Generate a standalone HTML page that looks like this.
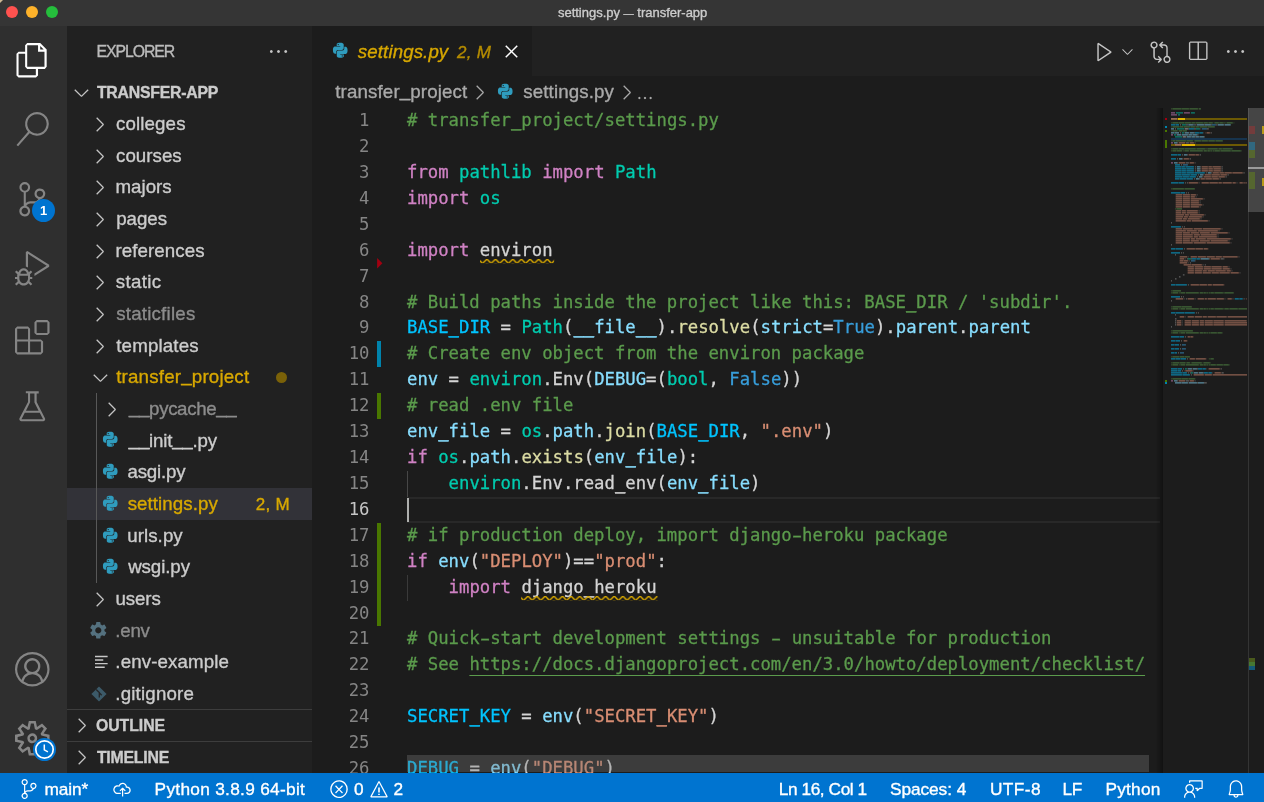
<!DOCTYPE html>
<html lang="en"><head><meta charset="utf-8"><title>settings.py — transfer-app</title>
<style>
*{box-sizing:border-box}
html,body{margin:0;padding:0;background:#1c1c1c;overflow:hidden}
body{width:1264px;height:802px;position:relative;font-family:"Liberation Sans",sans-serif;color:#cccccc;-webkit-font-smoothing:antialiased}
.abs,.ic,.ln,.cl,.tl,.sel,.t{position:absolute}
.ic{display:block;overflow:visible}
#title{left:0;top:0;width:1264px;height:26px;background:#353535}
#title .t{left:0;width:1264px;top:0;height:26px;line-height:25px;text-align:center;font-size:13px;color:#cccccc;letter-spacing:0px}
.tr{position:absolute;top:6px;width:12px;height:12px;border-radius:50%}
#act{left:0;top:26px;width:67px;height:747px;background:#2f2f2f}
#side{left:67px;top:26px;width:245px;height:747px;background:#212121}
#tabs{left:312px;top:26px;width:952px;height:50.4px;background:#212121}
#tab{left:312px;top:26px;width:220px;height:50.4px;background:#1c1c1c}
#status{left:0;top:772.7px;width:1264px;height:30px;background:#0074d0}
.t{white-space:pre;line-height:1;-webkit-text-stroke:0.35px currentColor}
.tl{height:31.68px;line-height:31.68px;font-size:18.72px;white-space:pre}
.fg{color:#cccccc} .dim{color:#8c8c8c} .warn{color:#d8a800}
.sel{left:67px;width:245px;height:31.68px;background:#323238}
.ln{left:312px;width:57.5px;text-align:right;height:25.92px;line-height:25.92px;font-family:"DejaVu Sans Mono","Liberation Mono",monospace;font-size:17.28px;color:#858585}
.ln.cur{color:#c6c6c6}
.cl{left:407px;height:25.92px;line-height:25.92px;font-family:"DejaVu Sans Mono","Liberation Mono",monospace;font-size:17.28px;white-space:pre;color:#d4d4d4;-webkit-text-stroke:0.3px currentColor}
.kw{color:#d082c4} .cls{color:#00ccaf} .var{color:#88deff} .const{color:#00c4ff} .fn{color:#dcdca4}
.str{color:#d98e73} .com{color:#5b9b4c} .b{color:#389edb} .txt{color:#d4d4d4}
.uu{position:relative;top:-2px;text-shadow:0 -0.5px 0 currentColor}
.us{text-shadow:0 0.8px 0 currentColor} .hy{display:inline-block;transform:scaleX(1.7)}
.ul{text-decoration:underline;text-underline-offset:4.8px;text-decoration-thickness:1.2px}
.st{top:772.7px;height:31.68px;line-height:31.68px;font-size:18.72px;color:#fff;white-space:pre}
</style></head><body>
<div id="title" class="abs"><div style="position:absolute;left:0;top:0;width:3px;height:3px;background:#cdb994;clip-path:polygon(0 0,100% 0,0 100%)"></div><div class="tr" style="left:6px;background:#ff524f"></div><div class="tr" style="left:26px;background:#fdb22a"></div><div class="tr" style="left:46px;background:#25be3c"></div></div>
<div id="act" class="abs"></div>
<div id="side" class="abs"></div>
<div id="tabs" class="abs"></div>
<div id="tab" class="abs"></div>
<div id="fg" class="abs" style="left:0;top:0;width:1264px;height:802px;will-change:transform">
<div id="ti" class="t " style="left:557.96px;top:6.00px;font-size:13px;letter-spacing:-0.013px;color:#cccccc;">settings.py <span style="font-size:10.2px">—</span> transfer-app</div>
<!-- activity bar icons -->
<svg class="ic" style="left:15.22px;top:43.28px" width="34.56" height="34.56" viewBox="0 0 16 16" ><path fill="#ffffff" d="M11.68 0H5.65L4.69 1.01V4H1.65L0.69 5.01V15.04L1.65 16H9.71L10.67 15.04V12H13.81L14.67 11.04V2.99ZM11.68 1.39 13.28 2.99H11.68ZM9.65 14.99H1.65V5.01H4.69V11.04L5.65 12H9.65ZM13.65 10.99H5.65V1.01H10.67V4H13.65Z"/></svg>
<svg class="ic" style="left:15.22px;top:112.40px" width="34.56" height="34.56" viewBox="0 0 16 16" ><path fill="#858585" d="M10.19 0Q8.53 0 7.17 0.88Q5.81 1.76 5.15 3.25Q4.48 4.75 4.72 6.35Q4.96 7.95 6.03 9.12L0.69 15.25L1.44 15.89L6.77 9.81Q8.21 10.93 10 10.99Q11.79 11.04 13.28 10.03Q14.77 9.01 15.36 7.31Q15.95 5.6 15.41 3.87Q14.88 2.13 13.41 1.07Q11.95 0 10.19 0ZM10.19 9.97Q8.96 9.97 7.92 9.39Q6.88 8.8 6.27 7.76Q5.65 6.72 5.65 5.49Q5.65 4.27 6.27 3.23Q6.88 2.19 7.92 1.6Q8.96 1.01 10.19 1.01Q11.41 1.01 12.43 1.6Q13.44 2.19 14.05 3.23Q14.67 4.27 14.67 5.49Q14.67 6.72 14.05 7.76Q13.44 8.8 12.43 9.41Q11.41 10.03 10.19 10.03Z"/></svg>
<svg class="ic" style="left:15.22px;top:181.52px" width="34.56" height="34.56" viewBox="0 0 16 16" ><path fill="#858585" d="M14.03 5.49Q14.03 4.8 13.65 4.19Q13.28 3.57 12.64 3.25Q12 2.93 11.31 2.99Q10.61 3.04 10.03 3.47Q9.44 3.89 9.2 4.56Q8.96 5.23 9.07 5.92Q9.17 6.61 9.65 7.12Q10.13 7.63 10.83 7.84Q10.56 8.37 10.08 8.67Q9.6 8.96 9.01 8.96H7.04Q5.87 8.96 5.01 9.76V4.91Q5.97 4.75 6.53 3.97Q7.09 3.2 7.01 2.24Q6.93 1.28 6.21 0.64Q5.49 0 4.53 0Q3.57 0 2.85 0.64Q2.13 1.28 2.05 2.24Q1.97 3.2 2.53 3.97Q3.09 4.75 4.05 4.91V10.99Q3.09 11.2 2.51 11.95Q1.92 12.69 2 13.65Q2.08 14.61 2.75 15.28Q3.41 15.95 4.37 16Q5.33 16.05 6.08 15.47Q6.83 14.88 6.99 13.92Q7.15 12.96 6.67 12.16Q6.19 11.36 5.23 11.09Q5.49 10.56 5.97 10.27Q6.45 9.97 7.04 9.97H9.01Q9.97 9.97 10.75 9.41Q11.52 8.85 11.84 7.95Q12.75 7.84 13.39 7.12Q14.03 6.4 14.03 5.49ZM3.04 2.51Q3.04 1.87 3.47 1.44Q3.89 1.01 4.53 1.01Q5.17 1.01 5.6 1.44Q6.03 1.87 6.03 2.48Q6.03 3.09 5.6 3.55Q5.17 4 4.53 4Q3.89 4 3.47 3.55Q3.04 3.09 3.04 2.51ZM6.03 13.44Q6.03 14.08 5.6 14.51Q5.17 14.93 4.53 14.93Q3.89 14.93 3.47 14.51Q3.04 14.08 3.04 13.47Q3.04 12.85 3.47 12.4Q3.89 11.95 4.53 11.95Q5.17 11.95 5.6 12.4Q6.03 12.85 6.03 13.44ZM11.52 6.99Q10.88 6.99 10.45 6.53Q10.03 6.08 10.03 5.47Q10.03 4.85 10.45 4.43Q10.88 4 11.49 4Q12.11 4 12.56 4.43Q13.01 4.85 13.01 5.47Q13.01 6.08 12.56 6.53Q12.11 6.99 11.52 6.99Z"/></svg>
<svg class="ic" style="left:15.22px;top:250.64px" width="34.56" height="34.56" viewBox="0 0 16 16" ><path fill="#858585" d="M7.31 9.01 6.4 9.87Q6.19 9.07 5.52 8.53Q4.85 8 4 8Q3.15 8 2.48 8.53Q1.81 9.07 1.6 9.87L0.69 9.01L0 9.71L1.17 10.83L1.01 10.99V12H0V13.01H1.01V13.07Q1.07 13.55 1.28 14.03L0 15.31L0.69 16L1.81 14.88Q2.19 15.41 2.77 15.71Q3.36 16 4 16Q4.64 16 5.23 15.71Q5.81 15.41 6.19 14.88L7.31 16L8 15.31L6.72 13.97Q6.93 13.55 6.99 13.01V12.96H8V12H6.99V10.99L6.88 10.83L8 9.71ZM4 9.01Q4.64 9.01 5.07 9.44Q5.49 9.87 5.49 10.51H2.51Q2.51 9.87 2.93 9.44Q3.36 9.01 4 9.01ZM6.03 13.01Q5.92 13.81 5.36 14.37Q4.8 14.93 4 14.99Q3.2 14.93 2.64 14.37Q2.08 13.81 2.03 13.01V11.52H6.03ZM15.84 6.4V7.25L9.01 11.57V10.4L14.67 6.83L6.03 1.33V7.63Q5.55 7.31 5.01 7.15V0.43L5.76 0Z"/></svg>
<svg class="ic" style="left:15.22px;top:319.76px" width="34.56" height="34.56" viewBox="0 0 16 16" ><path fill="#858585" d="M9.01 1.01 10.03 0H14.99L16 1.01V5.97L14.99 6.99H10.03L9.01 5.97ZM10.03 1.01V5.97H14.99V1.01ZM0 9.97V4L1.01 2.99H6.03L6.99 4V9.01H12L13.01 9.97V14.99L12 16H1.01L0 14.99ZM6.03 9.01V4H1.01V9.01ZM6.03 9.97H1.01V14.99H6.03ZM6.99 14.99H12V9.97H6.99Z"/></svg>
<svg class="ic" style="left:15.22px;top:388.88px" width="34.56" height="34.56" viewBox="0 0 16 16" ><path fill="#858585" d="M13.87 13.55 10.03 6.03V2.03H10.99V1.01H5.01V1.97H6.03V5.97L2.08 13.55Q1.87 14.08 2.16 14.53Q2.45 14.99 2.99 14.99H13.01Q13.55 14.99 13.84 14.53Q14.13 14.08 13.87 13.55ZM6.88 6.4 6.99 6.19V2.03H9.01V6.24L10.93 10.03H5.07ZM2.99 14.03 4.53 10.99H11.47L13.01 14.03Z"/></svg>
<svg class="ic" style="left:15.22px;top:651.72px" width="34.56" height="34.56" viewBox="0 0 16 16" ><path fill="#858585" d="M16 8Q16 5.81 14.93 3.97Q13.87 2.13 12.03 1.07Q10.19 0 8 0Q5.81 0 3.97 1.07Q2.13 2.13 1.07 3.97Q0 5.81 0 8Q0 9.76 0.75 11.36Q1.49 12.96 2.83 14.08L3.52 14.61Q5.55 16 8 16Q10.45 16 12.48 14.61L13.23 14.08Q14.51 12.96 15.25 11.36Q16 9.76 16 8ZM8 14.99Q5.81 14.99 4 13.71L4.05 13.33Q4.21 12.8 4.48 12.35Q4.75 11.89 5.12 11.52Q5.49 11.15 5.92 10.88Q6.35 10.61 6.91 10.48Q7.47 10.35 8 10.35Q8.8 10.35 9.57 10.64Q10.35 10.93 10.91 11.49Q11.47 12.05 11.79 12.8Q11.95 13.23 12.05 13.71Q10.24 14.99 8 14.99ZM5.55 7.57Q5.33 7.09 5.33 6.56Q5.33 6.03 5.55 5.55Q5.76 5.07 6.11 4.72Q6.45 4.37 6.93 4.13Q7.41 3.89 8 3.89Q8.59 3.89 9.04 4.11Q9.49 4.32 9.87 4.69Q10.24 5.07 10.45 5.55Q10.67 6.03 10.67 6.59Q10.67 7.15 10.45 7.6Q10.24 8.05 9.87 8.43Q9.49 8.8 9.01 9.01Q8 9.44 6.93 9.01Q6.51 8.8 6.13 8.43Q5.76 8.05 5.55 7.57ZM12.96 12.91Q12.96 12.91 12.96 12.85V12.8Q12.75 12.05 12.29 11.41Q11.84 10.77 11.2 10.29Q10.72 9.92 10.13 9.65Q10.4 9.49 10.61 9.28Q10.99 8.91 11.25 8.48Q11.79 7.63 11.73 6.56Q11.79 5.81 11.49 5.12Q11.2 4.43 10.67 3.89Q10.13 3.36 9.44 3.09Q8.75 2.83 7.97 2.83Q7.2 2.83 6.51 3.09Q5.81 3.36 5.31 3.89Q4.8 4.43 4.51 5.12Q4.21 5.81 4.21 6.56Q4.21 7.09 4.37 7.6Q4.53 8.11 4.75 8.48Q4.96 8.85 5.39 9.28Q5.6 9.49 5.87 9.71Q5.33 9.92 4.85 10.29Q4.21 10.77 3.76 11.41Q3.31 12.05 3.04 12.85V12.91Q2.08 11.95 1.55 10.67Q1.01 9.39 1.01 8Q1.01 6.08 1.95 4.48Q2.88 2.88 4.48 1.95Q6.08 1.01 8 1.01Q9.92 1.01 11.52 1.95Q13.12 2.88 14.05 4.48Q14.99 6.08 14.99 8Q14.99 9.39 14.48 10.67Q13.97 11.95 12.96 12.91Z"/></svg>
<svg class="ic" style="left:15.22px;top:720.82px" width="34.56" height="34.56" viewBox="0 0 16 16" ><path fill="#858585" d="M13.23 5.81 16 6.4V9.6L13.23 10.19L14.83 12.53L12.53 14.77L10.19 13.23L9.6 16H6.4L5.81 13.23L3.47 14.83L1.23 12.53L2.77 10.19L0 9.6V6.4L2.77 5.81L1.23 3.47L3.47 1.17L5.81 2.77L6.4 0H9.6L10.19 2.77L12.53 1.17L14.83 3.47ZM12.21 9.23 14.88 8.69V7.36L12.21 6.77L11.84 5.92L13.33 3.63L12.43 2.67L10.13 4.21L9.23 3.84L8.69 1.17H7.36L6.83 3.84L5.97 4.21L3.68 2.67L2.72 3.63L4.27 5.92L3.89 6.77L1.23 7.36V8.69L3.89 9.23L4.27 10.08L2.72 12.37L3.68 13.33L5.97 11.79L6.83 12.16L7.36 14.83H8.69L9.23 12.16L10.13 11.79L12.43 13.33L13.33 12.37L11.84 10.08ZM6.72 6.08Q7.31 5.71 8 5.71Q8.96 5.71 9.63 6.37Q10.29 7.04 10.29 8Q10.29 8.8 9.76 9.44Q9.23 10.08 8.43 10.24Q7.63 10.4 6.91 10.03Q6.19 9.65 5.89 8.88Q5.6 8.11 5.81 7.33Q6.03 6.56 6.72 6.08ZM7.36 8.96Q7.68 9.12 8 9.12Q8.48 9.12 8.8 8.8Q9.12 8.48 9.12 8.03Q9.12 7.57 8.88 7.28Q8.64 6.99 8.24 6.91Q7.84 6.83 7.47 7.01Q7.09 7.2 6.93 7.57Q6.77 7.95 6.91 8.35Q7.04 8.75 7.36 8.96Z"/></svg>
<div class="abs" style="left:32px;top:198.5px;width:23px;height:23px;border-radius:50%;background:#0074d0;color:#fff;font-size:13px;font-weight:bold;text-align:center;line-height:23px">1</div>
<div class="abs" style="left:32.500px;top:737.5px;width:23px;height:23px;border-radius:50%;background:#0074d0"></div>
<svg class="ic" style="left:32.5px;top:737.5px" width="23" height="23" viewBox="0 0 23 23"><circle cx="11.5" cy="11.5" r="8.700" fill="none" stroke="#fff" stroke-width="1.700"/><path d="M11.300 6.500v5.300l3.600 2" fill="none" stroke="#fff" stroke-width="1.500"/></svg>
<!-- sidebar -->
<div id="explorer" class="t " style="left:96.38px;top:44.00px;font-size:15.84px;letter-spacing:-1.050px;color:#bbbbbb;">EXPLORER</div>
<svg class="ic" style="left:267.26px;top:39.90px" width="23" height="23" viewBox="0 0 16 16"><path fill="#c5c5c5" d="M4 8Q4 8.43 3.71 8.72Q3.41 9.01 2.99 9.01Q2.56 9.01 2.29 8.72Q2.03 8.43 2.03 8Q2.03 7.57 2.29 7.28Q2.56 6.99 2.99 6.99Q3.41 6.99 3.71 7.28Q4 7.57 4 8ZM9.01 8Q9.01 8.43 8.72 8.72Q8.43 9.01 8 9.01Q7.57 9.01 7.28 8.72Q6.99 8.43 6.99 8Q6.99 7.57 7.28 7.28Q7.57 6.99 8 6.99Q8.43 6.99 8.72 7.28Q9.01 7.57 9.01 8ZM14.03 8Q14.03 8.43 13.73 8.72Q13.44 9.01 13.01 9.01Q12.59 9.01 12.29 8.72Q12 8.43 12 8Q12 7.57 12.29 7.28Q12.59 6.99 13.01 6.99Q13.44 6.99 13.73 7.28Q14.03 7.57 14.03 8Z"/></svg>
<svg class="ic" style="left:70.14px;top:81.10px" width="23" height="23" viewBox="0 0 16 16"><path fill="#c5c5c5" d="M8 10.08 12.32 5.71 12.96 6.35 8.27 10.99H7.68L2.99 6.35L3.63 5.71Z"/></svg>
<div id="root" class="t " style="left:96.89px;top:85.00px;font-size:15.84px;letter-spacing:-0.225px;color:#cccccc;font-weight:bold">TRANSFER-APP</div>
<svg class="ic" style="left:88.10px;top:113.08px" width="23" height="23" viewBox="0 0 16 16"><path fill="#c5c5c5" d="M10.08 8 5.71 3.68 6.35 3.04 10.99 7.73V8.32L6.35 13.01L5.71 12.37Z"/></svg>
<div id="tr0" class="t " style="left:116.04px;top:115.00px;font-size:18.72px;letter-spacing:0.118px;color:#cccccc;">colleges</div>
<svg class="ic" style="left:88.10px;top:144.76px" width="23" height="23" viewBox="0 0 16 16"><path fill="#c5c5c5" d="M10.08 8 5.71 3.68 6.35 3.04 10.99 7.73V8.32L6.35 13.01L5.71 12.37Z"/></svg>
<div id="tr1" class="t " style="left:116.04px;top:147.00px;font-size:18.72px;letter-spacing:0.023px;color:#cccccc;">courses</div>
<svg class="ic" style="left:88.10px;top:176.44px" width="23" height="23" viewBox="0 0 16 16"><path fill="#c5c5c5" d="M10.08 8 5.71 3.68 6.35 3.04 10.99 7.73V8.32L6.35 13.01L5.71 12.37Z"/></svg>
<div id="tr2" class="t " style="left:115.47px;top:178.00px;font-size:18.72px;letter-spacing:0.027px;color:#cccccc;">majors</div>
<svg class="ic" style="left:88.10px;top:208.12px" width="23" height="23" viewBox="0 0 16 16"><path fill="#c5c5c5" d="M10.08 8 5.71 3.68 6.35 3.04 10.99 7.73V8.32L6.35 13.01L5.71 12.37Z"/></svg>
<div id="tr3" class="t " style="left:116.13px;top:210.00px;font-size:18.72px;letter-spacing:0.004px;color:#cccccc;">pages</div>
<svg class="ic" style="left:88.10px;top:239.80px" width="23" height="23" viewBox="0 0 16 16"><path fill="#c5c5c5" d="M10.08 8 5.71 3.68 6.35 3.04 10.99 7.73V8.32L6.35 13.01L5.71 12.37Z"/></svg>
<div id="tr4" class="t " style="left:115.54px;top:242.00px;font-size:18.72px;letter-spacing:0.073px;color:#cccccc;">references</div>
<svg class="ic" style="left:88.10px;top:271.48px" width="23" height="23" viewBox="0 0 16 16"><path fill="#c5c5c5" d="M10.08 8 5.71 3.68 6.35 3.04 10.99 7.73V8.32L6.35 13.01L5.71 12.37Z"/></svg>
<div id="tr5" class="t " style="left:115.81px;top:273.00px;font-size:18.72px;letter-spacing:0.320px;color:#cccccc;">static</div>
<svg class="ic" style="left:88.10px;top:303.16px" width="23" height="23" viewBox="0 0 16 16"><path fill="#c5c5c5" d="M10.08 8 5.71 3.68 6.35 3.04 10.99 7.73V8.32L6.35 13.01L5.71 12.37Z"/></svg>
<div id="tr6" class="t " style="left:116.20px;top:305.00px;font-size:18.72px;letter-spacing:0.214px;color:#8c8c8c;">staticfiles</div>
<svg class="ic" style="left:88.10px;top:334.84px" width="23" height="23" viewBox="0 0 16 16"><path fill="#c5c5c5" d="M10.08 8 5.71 3.68 6.35 3.04 10.99 7.73V8.32L6.35 13.01L5.71 12.37Z"/></svg>
<div id="tr7" class="t " style="left:116.27px;top:337.00px;font-size:18.72px;letter-spacing:0.150px;color:#cccccc;">templates</div>
<svg class="ic" style="left:88.74px;top:366.06px" width="23" height="23" viewBox="0 0 16 16"><path fill="#c5c5c5" d="M8 10.08 12.32 5.71 12.96 6.35 8.27 10.99H7.68L2.99 6.35L3.63 5.71Z"/></svg>
<div id="tr8" class="t " style="left:116.18px;top:368.00px;font-size:18.72px;letter-spacing:0.199px;color:#d8a800;">transfer<span class="uu">_</span>project</div>
<svg class="ic" style="left:100.10px;top:398.20px" width="23" height="23" viewBox="0 0 16 16"><path fill="#c5c5c5" d="M10.08 8 5.71 3.68 6.35 3.04 10.99 7.73V8.32L6.35 13.01L5.71 12.37Z"/></svg>
<div id="tr9" class="t " style="left:129.01px;top:400.00px;font-size:18.72px;letter-spacing:-0.359px;color:#8c8c8c;"><span class="uu">_</span><span class="uu">_</span>pycache<span class="uu">_</span><span class="uu">_</span></div>
<svg class="ic" style="left:101.85px;top:431.47px" width="16.5" height="16.5" viewBox="0 0 32 32"><path fill="#2f9cbe" d="M15.9 1.5c-7.2 0-6.8 3.1-6.8 3.1v3.3h6.9v1H6.4S1.8 8.300 1.800 15.700s4 7.100 4 7.100h2.400v-3.400s-.13-4 3.950-4h6.800s3.800.06 3.800-3.700V5.500s.58-4-6.850-4zM12.100 3.700a1.240 1.240 0 1 1 0 2.480 1.240 1.240 0 0 1 0-2.480z"/><path fill="#2f9cbe" d="M16.100 30.500c7.200 0 6.800-3.100 6.800-3.100v-3.300H16v-1h9.600s4.600.52 4.600-6.800-4-7.100-4-7.100h-2.400v3.400s.13 4-3.950 4h-6.800s-3.800-.06-3.800 3.700v6.200s-.58 4 6.850 4zM19.900 28.300a1.240 1.240 0 1 1 0-2.480 1.240 1.240 0 0 1 0 2.480z"/></svg>
<div id="tr10" class="t " style="left:128.74px;top:432.00px;font-size:18.72px;letter-spacing:-0.218px;color:#cccccc;"><span class="uu">_</span><span class="uu">_</span>init<span class="uu">_</span><span class="uu">_</span>.py</div>
<svg class="ic" style="left:101.85px;top:463.15px" width="16.5" height="16.5" viewBox="0 0 32 32"><path fill="#2f9cbe" d="M15.9 1.5c-7.2 0-6.8 3.1-6.8 3.1v3.3h6.9v1H6.4S1.8 8.300 1.800 15.700s4 7.100 4 7.100h2.400v-3.400s-.13-4 3.950-4h6.800s3.800.06 3.800-3.700V5.500s.58-4-6.850-4zM12.100 3.700a1.240 1.240 0 1 1 0 2.480 1.240 1.240 0 0 1 0-2.480z"/><path fill="#2f9cbe" d="M16.100 30.500c7.200 0 6.800-3.100 6.800-3.100v-3.300H16v-1h9.600s4.600.52 4.600-6.800-4-7.100-4-7.100h-2.400v3.400s.13 4-3.950 4h-6.800s-3.800-.06-3.800 3.700v6.200s-.58 4 6.850 4zM19.900 28.300a1.240 1.240 0 1 1 0-2.480 1.240 1.240 0 0 1 0 2.480z"/></svg>
<div id="tr11" class="t " style="left:127.44px;top:463.00px;font-size:18.72px;letter-spacing:-0.166px;color:#cccccc;">asgi.py</div>
<div class="sel" style="top:488.24px"></div>
<svg class="ic" style="left:101.85px;top:494.83px" width="16.5" height="16.5" viewBox="0 0 32 32"><path fill="#2f9cbe" d="M15.9 1.5c-7.2 0-6.8 3.1-6.8 3.1v3.3h6.9v1H6.4S1.8 8.300 1.800 15.700s4 7.100 4 7.100h2.400v-3.400s-.13-4 3.950-4h6.800s3.800.06 3.800-3.700V5.500s.58-4-6.850-4zM12.100 3.700a1.240 1.240 0 1 1 0 2.480 1.240 1.240 0 0 1 0-2.480z"/><path fill="#2f9cbe" d="M16.100 30.500c7.200 0 6.800-3.100 6.800-3.100v-3.300H16v-1h9.600s4.600.52 4.600-6.800-4-7.100-4-7.100h-2.400v3.400s.13 4-3.950 4h-6.800s-3.800-.06-3.800 3.700v6.200s-.58 4 6.850 4zM19.900 28.300a1.240 1.240 0 1 1 0-2.480 1.240 1.240 0 0 1 0 2.480z"/></svg>
<div id="tr12" class="t " style="left:127.65px;top:495.00px;font-size:18.72px;letter-spacing:0.081px;color:#d8a800;">settings.py</div>
<svg class="ic" style="left:101.85px;top:526.51px" width="16.5" height="16.5" viewBox="0 0 32 32"><path fill="#2f9cbe" d="M15.9 1.5c-7.2 0-6.8 3.1-6.8 3.1v3.3h6.9v1H6.4S1.8 8.300 1.800 15.700s4 7.100 4 7.100h2.400v-3.400s-.13-4 3.950-4h6.800s3.800.06 3.800-3.700V5.500s.58-4-6.850-4zM12.100 3.700a1.240 1.240 0 1 1 0 2.480 1.240 1.240 0 0 1 0-2.480z"/><path fill="#2f9cbe" d="M16.100 30.500c7.200 0 6.800-3.100 6.800-3.100v-3.300H16v-1h9.600s4.600.52 4.600-6.800-4-7.100-4-7.100h-2.400v3.400s.13 4-3.950 4h-6.800s-3.800-.06-3.800 3.700v6.200s-.58 4 6.850 4zM19.900 28.300a1.240 1.240 0 1 1 0-2.480 1.240 1.240 0 0 1 0 2.480z"/></svg>
<div id="tr13" class="t " style="left:127.16px;top:527.00px;font-size:18.72px;letter-spacing:0.080px;color:#cccccc;">urls.py</div>
<svg class="ic" style="left:101.85px;top:558.19px" width="16.5" height="16.5" viewBox="0 0 32 32"><path fill="#2f9cbe" d="M15.9 1.5c-7.2 0-6.8 3.1-6.8 3.1v3.3h6.9v1H6.4S1.8 8.300 1.800 15.700s4 7.100 4 7.100h2.400v-3.400s-.13-4 3.950-4h6.800s3.800.06 3.800-3.700V5.500s.58-4-6.850-4zM12.100 3.700a1.240 1.240 0 1 1 0 2.480 1.240 1.240 0 0 1 0-2.480z"/><path fill="#2f9cbe" d="M16.100 30.500c7.200 0 6.800-3.100 6.800-3.100v-3.300H16v-1h9.600s4.600.52 4.600-6.800-4-7.100-4-7.100h-2.400v3.400s.13 4-3.950 4h-6.800s-3.800-.06-3.800 3.700v6.200s-.58 4 6.850 4zM19.900 28.300a1.240 1.240 0 1 1 0-2.480 1.240 1.240 0 0 1 0 2.480z"/></svg>
<div id="tr14" class="t " style="left:128.14px;top:558.00px;font-size:18.72px;letter-spacing:-0.081px;color:#cccccc;">wsgi.py</div>
<svg class="ic" style="left:88.10px;top:588.28px" width="23" height="23" viewBox="0 0 16 16"><path fill="#c5c5c5" d="M10.08 8 5.71 3.68 6.35 3.04 10.99 7.73V8.32L6.35 13.01L5.71 12.37Z"/></svg>
<div id="tr15" class="t " style="left:115.54px;top:590.00px;font-size:18.72px;letter-spacing:-0.123px;color:#cccccc;">users</div>
<svg class="ic" style="left:88.2px;top:620.00px" width="20.6" height="20.6" viewBox="0 0 24 24"><path fill="#54717f" d="M19.14 12.94c.04-.3.06-.61.06-.94 0-.32-.02-.64-.07-.94l2.030-1.580a.49.49 0 0 0 .12-.61l-1.920-3.320a.488.488 0 0 0-.59-.22l-2.390.96c-.5-.38-1.030-.7-1.620-.94l-.36-2.540a.484.484 0 0 0-.48-.41h-3.840c-.24 0-.43.17-.47.41l-.36 2.540c-.59.24-1.130.57-1.620.94l-2.390-.96c-.22-.08-.47 0-.59.22L2.740 8.870c-.12.21-.08.47.12.61l2.030 1.580c-.05.3-.09.63-.09.94s.02.640.07.940l-2.030 1.580a.49.49 0 0 0-.12.61l1.920 3.320c.12.22.37.29.59.22l2.390-.96c.5.38 1.030.7 1.620.94l.36 2.540c.05.24.24.41.48.41h3.840c.24 0 .44-.17.47-.41l.36-2.540c.59-.24 1.130-.56 1.620-.94l2.390.96c.22.08.47 0 .59-.22l1.920-3.320c.12-.22.07-.47-.12-.61l-2.010-1.580zM12 15.600c-1.980 0-3.600-1.620-3.600-3.600s1.620-3.600 3.600-3.600 3.600 1.620 3.600 3.600-1.620 3.600-3.600 3.600z"/></svg>
<div id="tr16" class="t " style="left:115.29px;top:622.00px;font-size:18.72px;letter-spacing:-0.252px;color:#8c8c8c;">.env</div>
<svg class="ic" style="left:94.9px;top:655.18px" width="13.6" height="13.6" viewBox="0 0 14 14"><path stroke="#c8c8c8" stroke-width="1.5" d="M0 1.500h13M0 5.200h8.500M0 8.900h13M0 12.600h10"/></svg>
<div id="tr17" class="t " style="left:115.34px;top:653.00px;font-size:18.72px;letter-spacing:0.117px;color:#cccccc;">.env-example</div>
<svg class="ic" style="left:90.5px;top:685.66px" width="16" height="16" viewBox="0 0 16 16"><path fill="#3c5a69" d="M8 .4 15.600 8 8 15.600.4 8z"/><path fill="none" stroke="#252526" stroke-width="1.300" d="M5.200 3.500 8.300 6.500v5M8.300 6.800l2.400 2.400"/></svg>
<div id="tr18" class="t " style="left:115.34px;top:685.00px;font-size:18.72px;letter-spacing:0.174px;color:#cccccc;">.gitignore</div>
<div class="abs" style="left:96px;top:393px;width:1px;height:190px;background:#585858"></div>
<div class="abs" style="left:276px;top:371.500px;width:11px;height:11px;border-radius:50%;background:#7a6108"></div>
<div id="badge" class="t " style="left:255.70px;top:496.00px;font-size:17.0px;letter-spacing:0.321px;color:#d8a800;">2, M</div>
<div class="abs" style="left:67px;top:709px;width:245px;height:1px;background:#3d3d3d"></div>
<div class="abs" style="left:67px;top:741px;width:245px;height:1px;background:#3d3d3d"></div>
<svg class="ic" style="left:70.00px;top:713.96px" width="23" height="23" viewBox="0 0 16 16"><path fill="#c5c5c5" d="M10.08 8 5.71 3.68 6.35 3.04 10.99 7.73V8.32L6.35 13.01L5.71 12.37Z"/></svg>
<div id="outline" class="t " style="left:96.00px;top:718.00px;font-size:15.84px;letter-spacing:-0.062px;color:#cccccc;font-weight:bold">OUTLINE</div>
<svg class="ic" style="left:70.00px;top:745.96px" width="23" height="23" viewBox="0 0 16 16"><path fill="#c5c5c5" d="M10.08 8 5.71 3.68 6.35 3.04 10.99 7.73V8.32L6.35 13.01L5.71 12.37Z"/></svg>
<div id="timeline" class="t " style="left:96.89px;top:750.00px;font-size:15.84px;letter-spacing:-0.208px;color:#cccccc;font-weight:bold">TIMELINE</div>
<!-- tab -->
<svg class="ic" style="left:332.25px;top:42.45px" width="16.5" height="16.5" viewBox="0 0 32 32"><path fill="#2f9cbe" d="M15.9 1.5c-7.2 0-6.8 3.1-6.8 3.1v3.3h6.9v1H6.4S1.8 8.300 1.800 15.700s4 7.100 4 7.100h2.400v-3.400s-.13-4 3.950-4h6.800s3.800.06 3.800-3.700V5.500s.58-4-6.850-4zM12.100 3.700a1.240 1.240 0 1 1 0 2.480 1.240 1.240 0 0 1 0-2.480z"/><path fill="#2f9cbe" d="M16.100 30.500c7.200 0 6.800-3.100 6.800-3.100v-3.300H16v-1h9.600s4.600.52 4.600-6.800-4-7.100-4-7.100h-2.400v3.400s.13 4-3.950 4h-6.800s-3.800-.06-3.800 3.700v6.200s-.58 4 6.850 4zM19.900 28.300a1.240 1.240 0 1 1 0-2.480 1.240 1.240 0 0 1 0 2.480z"/></svg>
<div id="tabname" class="t " style="left:357.86px;top:43.00px;font-size:18.72px;letter-spacing:0.096px;color:#d8a800;font-style:italic">settings.py</div>
<div id="tabbadge" class="t " style="left:456.92px;top:44.00px;font-size:17.0px;letter-spacing:0.335px;color:#b58c00;font-style:italic">2, M</div>
<svg class="ic" style="left:499.80px;top:40.00px" width="23" height="23" viewBox="0 0 16 16"><path fill="#ffffff" d="M8 8.69 11.63 12.37 12.37 11.63 8.69 8 12.37 4.37 11.63 3.63 8 7.31 4.37 3.63 3.63 4.37 7.31 8 3.63 11.63 4.37 12.37Z"/></svg>
<svg class="ic" style="left:1092.55px;top:40.03px" width="23" height="23" viewBox="0 0 16 16"><path fill="#c5c5c5" d="M3.79 1.97 2.99 2.4V14.4L3.79 14.83L12.8 8.85V8ZM4 13.49V3.36L11.63 8.43Z"/></svg>
<svg class="ic" style="left:1118.58px;top:43.23px" width="17" height="17" viewBox="0 0 16 16"><path fill="#c5c5c5" d="M8 10.08 12.32 5.71 12.96 6.35 8.27 10.99H7.68L2.99 6.35L3.63 5.71Z"/></svg>
<svg class="ic" style="left:1148.78px;top:40.07px" width="23" height="23" viewBox="0 0 16 16"><path fill="#c5c5c5" d="M7.41 13.01 6.13 11.73 6.77 11.04 8.91 13.17V13.87L6.77 16L6.08 15.25L7.36 13.97H5.49Q4.48 14.03 3.73 13.28Q2.99 12.53 2.99 11.52V5.97Q2.24 5.81 1.71 5.28Q1.17 4.75 1.04 4Q0.91 3.25 1.2 2.56Q1.49 1.87 2.11 1.44Q2.72 1.01 3.52 1.01Q4 1.01 4.48 1.17Q5.44 1.6 5.87 2.56Q6.03 3.04 6.03 3.52Q6.03 4.43 5.47 5.12Q4.91 5.81 4.05 5.97V11.47Q4.05 12.11 4.48 12.56Q4.91 13.01 5.55 13.01ZM2.72 4.75Q3.15 5.01 3.68 4.96Q4.21 4.91 4.59 4.53Q4.96 4.16 5.01 3.63Q5.07 3.09 4.8 2.69Q4.53 2.29 4.11 2.11Q3.68 1.92 3.25 2Q2.83 2.08 2.48 2.43Q2.13 2.77 2.05 3.2Q1.97 3.63 2.16 4.05Q2.35 4.48 2.72 4.75ZM13.01 11.04Q13.76 11.2 14.29 11.73Q14.93 12.37 15.01 13.25Q15.09 14.13 14.61 14.88Q14.19 15.52 13.49 15.81Q12.8 16.11 12.05 15.95Q11.31 15.79 10.77 15.25Q10.24 14.72 10.08 13.97Q9.92 13.23 10.21 12.53Q10.51 11.84 11.15 11.41Q11.57 11.15 12.05 11.04V5.49Q12.05 4.85 11.6 4.43Q11.15 4 10.56 4H8.69L9.97 5.28L9.23 5.97L7.09 3.84V3.15L9.23 1.01L9.97 1.71L8.69 2.99H10.56Q11.57 2.99 12.32 3.71Q13.07 4.43 13.01 5.49ZM12.69 14.99Q13.07 14.93 13.39 14.72Q13.71 14.51 13.89 14.13Q14.08 13.76 14.05 13.39Q14.03 13.01 13.79 12.64Q13.55 12.27 13.12 12.11Q12.69 11.95 12.24 12.03Q11.79 12.11 11.47 12.43Q11.15 12.75 11.07 13.2Q10.99 13.65 11.17 14.08Q11.36 14.51 11.79 14.77Q12.21 15.04 12.69 14.99Z"/></svg>
<svg class="ic" style="left:1186.07px;top:39.93px" width="23" height="23" viewBox="0 0 16 16"><path fill="#c5c5c5" d="M14.03 1.01H2.99L2.03 1.97V13.01L2.99 13.97H14.03L14.99 13.01V1.97ZM8 13.01H2.99V1.97H8ZM14.03 13.01H9.01V1.97H14.03Z"/></svg>
<svg class="ic" style="left:1223.76px;top:39.80px" width="23" height="23" viewBox="0 0 16 16"><path fill="#c5c5c5" d="M4 8Q4 8.43 3.71 8.72Q3.41 9.01 2.99 9.01Q2.56 9.01 2.29 8.72Q2.03 8.43 2.03 8Q2.03 7.57 2.29 7.28Q2.56 6.99 2.99 6.99Q3.41 6.99 3.71 7.28Q4 7.57 4 8ZM9.01 8Q9.01 8.43 8.72 8.72Q8.43 9.01 8 9.01Q7.57 9.01 7.28 8.72Q6.99 8.43 6.99 8Q6.99 7.57 7.28 7.28Q7.57 6.99 8 6.99Q8.43 6.99 8.72 7.28Q9.01 7.57 9.01 8ZM14.03 8Q14.03 8.43 13.73 8.72Q13.44 9.01 13.01 9.01Q12.59 9.01 12.29 8.72Q12 8.43 12 8Q12 7.57 12.29 7.28Q12.59 6.99 13.01 6.99Q13.44 6.99 13.73 7.28Q14.03 7.57 14.03 8Z"/></svg>
<!-- breadcrumbs -->
<div id="bc1" class="t " style="left:335.26px;top:83.00px;font-size:18.72px;letter-spacing:0.139px;color:#a9a9a9;">transfer<span class="uu">_</span>project</div>
<svg class="ic" style="left:468.00px;top:81.26px" width="23" height="23" viewBox="0 0 16 16"><path fill="#a9a9a9" d="M10.08 8 5.71 3.68 6.35 3.04 10.99 7.73V8.32L6.35 13.01L5.71 12.37Z"/></svg>
<svg class="ic" style="left:496.55px;top:82.75px" width="16.5" height="16.5" viewBox="0 0 32 32"><path fill="#2f9cbe" d="M15.9 1.5c-7.2 0-6.8 3.1-6.8 3.1v3.3h6.9v1H6.4S1.8 8.300 1.800 15.700s4 7.100 4 7.100h2.400v-3.400s-.13-4 3.950-4h6.800s3.800.06 3.800-3.700V5.500s.58-4-6.850-4zM12.100 3.700a1.240 1.240 0 1 1 0 2.480 1.240 1.240 0 0 1 0-2.480z"/><path fill="#2f9cbe" d="M16.100 30.500c7.200 0 6.800-3.100 6.800-3.100v-3.300H16v-1h9.600s4.600.52 4.600-6.800-4-7.100-4-7.100h-2.400v3.400s.13 4-3.950 4h-6.800s-3.800-.06-3.800 3.700v6.200s-.58 4 6.850 4zM19.900 28.300a1.240 1.240 0 1 1 0-2.480 1.240 1.240 0 0 1 0 2.480z"/></svg>
<div id="bc2" class="t " style="left:523.32px;top:83.00px;font-size:18.72px;letter-spacing:0.115px;color:#a9a9a9;">settings.py</div>
<svg class="ic" style="left:614.70px;top:81.26px" width="23" height="23" viewBox="0 0 16 16"><path fill="#a9a9a9" d="M10.08 8 5.71 3.68 6.35 3.04 10.99 7.73V8.32L6.35 13.01L5.71 12.37Z"/></svg>
<svg class="ic" style="left:635.67px;top:89.40px" width="18" height="18" viewBox="0 0 16 16"><path fill="#a9a9a9" d="M4 8Q4 8.43 3.71 8.72Q3.41 9.01 2.99 9.01Q2.56 9.01 2.29 8.72Q2.03 8.43 2.03 8Q2.03 7.57 2.29 7.28Q2.56 6.99 2.99 6.99Q3.41 6.99 3.71 7.28Q4 7.57 4 8ZM9.01 8Q9.01 8.43 8.72 8.72Q8.43 9.01 8 9.01Q7.57 9.01 7.28 8.72Q6.99 8.43 6.99 8Q6.99 7.57 7.28 7.28Q7.57 6.99 8 6.99Q8.43 6.99 8.72 7.28Q9.01 7.57 9.01 8ZM14.03 8Q14.03 8.43 13.73 8.72Q13.44 9.01 13.01 9.01Q12.59 9.01 12.29 8.72Q12 8.43 12 8Q12 7.57 12.29 7.28Q12.59 6.99 13.01 6.99Q13.44 6.99 13.73 7.28Q14.03 7.57 14.03 8Z"/></svg>
<!-- editor -->
<div class="abs" style="left:407px;top:496.88px;width:753px;height:25.92px;border-top:2px solid #282828;border-bottom:2px solid #282828"></div>
<div class="abs" style="left:406.8px;top:497.88px;width:2.5px;height:23.92px;background:#aeafad"></div>
<div class="abs" style="left:407.3px;top:470.96px;width:1px;height:25.92px;background:#474747"></div>
<div class="abs" style="left:407.3px;top:574.64px;width:1px;height:25.92px;background:#3a3a3a"></div>
<div class="abs" style="left:376.8px;top:341.36px;width:4.2px;height:25.92px;background:#0083ac"></div>
<div class="abs" style="left:376.8px;top:393.20px;width:4.2px;height:25.92px;background:#497700"></div>
<div class="abs" style="left:376.8px;top:522.80px;width:4.2px;height:103.68px;background:#497700"></div>
<svg class="ic" style="left:377px;top:258.3px" width="5.5" height="10.5" viewBox="0 0 6 12"><path d="M0 0L6 6 0 12z" fill="#a20011"/></svg>
<div class="ln" style="top:108.08px">1</div>
<div class="cl" style="top:108.08px"><span class="com"># transfer<span class="us">_</span>project/settings.py</span></div>
<div class="ln" style="top:134.00px">2</div>
<div class="ln" style="top:159.92px">3</div>
<div class="cl" style="top:159.92px"><span class="kw">from</span><span class="txt"> </span><span class="cls">pathlib</span><span class="txt"> </span><span class="kw">import</span><span class="txt"> </span><span class="cls">Path</span></div>
<div class="ln" style="top:185.84px">4</div>
<div class="cl" style="top:185.84px"><span class="kw">import</span><span class="txt"> </span><span class="cls">os</span></div>
<div class="ln" style="top:211.76px">5</div>
<div class="ln" style="top:237.68px">6</div>
<div class="cl" style="top:237.68px"><span class="kw">import</span><span class="txt"> </span><span class="txt sq">environ</span></div>
<div class="ln" style="top:263.60px">7</div>
<div class="ln" style="top:289.52px">8</div>
<div class="cl" style="top:289.52px"><span class="com"># Build paths inside the project like this: BASE<span class="us">_</span>DIR / &#x27;subdir&#x27;.</span></div>
<div class="ln" style="top:315.44px">9</div>
<div class="cl" style="top:315.44px"><span class="const">BASE<span class="us">_</span>DIR</span><span class="txt"> = </span><span class="cls">Path</span><span class="txt">(</span><span class="var"><span class="us">_</span><span class="us">_</span>file<span class="us">_</span><span class="us">_</span></span><span class="txt">).</span><span class="fn">resolve</span><span class="txt">(</span><span class="var">strict</span><span class="txt">=</span><span class="b">True</span><span class="txt">).</span><span class="var">parent</span><span class="txt">.</span><span class="var">parent</span></div>
<div class="ln" style="top:341.36px">10</div>
<div class="cl" style="top:341.36px"><span class="com"># Create env object from the environ package</span></div>
<div class="ln" style="top:367.28px">11</div>
<div class="cl" style="top:367.28px"><span class="var">env</span><span class="txt"> = </span><span class="cls">environ</span><span class="txt">.Env(</span><span class="var">DEBUG</span><span class="txt">=(</span><span class="cls">bool</span><span class="txt">, </span><span class="b">False</span><span class="txt">))</span></div>
<div class="ln" style="top:393.20px">12</div>
<div class="cl" style="top:393.20px"><span class="com"># read .env file</span></div>
<div class="ln" style="top:419.12px">13</div>
<div class="cl" style="top:419.12px"><span class="var">env<span class="us">_</span>file</span><span class="txt"> = </span><span class="cls">os</span><span class="txt">.</span><span class="var">path</span><span class="txt">.</span><span class="fn">join</span><span class="txt">(</span><span class="const">BASE<span class="us">_</span>DIR</span><span class="txt">, </span><span class="str">&quot;.env&quot;</span><span class="txt">)</span></div>
<div class="ln" style="top:445.04px">14</div>
<div class="cl" style="top:445.04px"><span class="kw">if</span><span class="txt"> </span><span class="cls">os</span><span class="txt">.</span><span class="var">path</span><span class="txt">.</span><span class="fn">exists</span><span class="txt">(</span><span class="var">env<span class="us">_</span>file</span><span class="txt">):</span></div>
<div class="ln" style="top:470.96px">15</div>
<div class="cl" style="top:470.96px"><span class="txt">    </span><span class="cls">environ</span><span class="txt">.Env.read<span class="us">_</span>env(</span><span class="var">env<span class="us">_</span>file</span><span class="txt">)</span></div>
<div class="ln cur" style="top:496.88px">16</div>
<div class="ln" style="top:522.80px">17</div>
<div class="cl" style="top:522.80px"><span class="com"># if production deploy, import django<span class="hy">-</span>heroku package</span></div>
<div class="ln" style="top:548.72px">18</div>
<div class="cl" style="top:548.72px"><span class="kw">if</span><span class="txt"> </span><span class="var">env</span><span class="txt">(</span><span class="str">&quot;DEPLOY&quot;</span><span class="txt">)==</span><span class="str">&quot;prod&quot;</span><span class="txt">:</span></div>
<div class="ln" style="top:574.64px">19</div>
<div class="cl" style="top:574.64px"><span class="txt">    </span><span class="kw">import</span><span class="txt"> </span><span class="txt sq">django<span class="us">_</span>heroku</span></div>
<div class="ln" style="top:600.56px">20</div>
<div class="ln" style="top:626.48px">21</div>
<div class="cl" style="top:626.48px"><span class="com"># Quick<span class="hy">-</span>start development settings <span class="hy">-</span> unsuitable for production</span></div>
<div class="ln" style="top:652.40px">22</div>
<div class="cl" style="top:652.40px"><span class="com"># See </span><span class="com ul">https://docs.djangoproject.com/en/3.0/howto/deployment/checklist/</span></div>
<div class="ln" style="top:678.32px">23</div>
<div class="ln" style="top:704.24px">24</div>
<div class="cl" style="top:704.24px"><span class="const">SECRET<span class="us">_</span>KEY</span><span class="txt"> = </span><span class="var">env</span><span class="txt">(</span><span class="str">&quot;SECRET<span class="us">_</span>KEY&quot;</span><span class="txt">)</span></div>
<div class="ln" style="top:730.16px">25</div>
<div class="ln" style="top:756.08px">26</div>
<div class="cl" style="top:756.08px"><span class="const">DEBUG</span><span class="txt"> = </span><span class="var">env</span><span class="txt">(</span><span class="str">&quot;DEBUG&quot;</span><span class="txt">)</span></div>
<svg class="ic" style="left:479.80px;top:259.28px" width="74.20" height="4.32" viewBox="0 0 51.528 3"><defs><pattern id="sq1" width="6" height="3" patternUnits="userSpaceOnUse"><g fill="#d8a800"><polygon points="5.5,0 2.5,3 1.1,3 4.1,0"/><polygon points="4,0 6,2 6,0.6 5.4,0"/><polygon points="0,2 1,3 2.4,3 0,0.6"/></g></pattern></defs><rect width="51.528" height="3" fill="url(#sq1)"/></svg>
<svg class="ic" style="left:521.40px;top:596.24px" width="136.60" height="4.32" viewBox="0 0 94.861 3"><defs><pattern id="sq2" width="6" height="3" patternUnits="userSpaceOnUse"><g fill="#d8a800"><polygon points="5.5,0 2.5,3 1.1,3 4.1,0"/><polygon points="4,0 6,2 6,0.6 5.4,0"/><polygon points="0,2 1,3 2.4,3 0,0.6"/></g></pattern></defs><rect width="94.861" height="3" fill="url(#sq2)"/></svg>
<!-- minimap -->
<div class="abs" style="left:1156px;top:108px;width:7px;height:665px;background:linear-gradient(90deg,rgba(0,0,0,0),rgba(0,0,0,.35))"></div>
<div class="abs" style="left:1171px;top:117.6px;width:76.2px;height:2.5px;background:#6d5a04"></div>
<div class="abs" style="left:1171px;top:137.6px;width:76.2px;height:2.5px;background:#17344e"></div>
<div class="abs" style="left:1171px;top:143.6px;width:76.2px;height:2.5px;background:#6d5a04"></div>
<div class="abs" style="left:1165px;top:118px;width:2px;height:2px;background:#a20011"></div>
<div class="abs" style="left:1165px;top:126px;width:2px;height:2px;background:#0083ac"></div>
<div class="abs" style="left:1165px;top:130px;width:2px;height:2px;background:#497700"></div>
<div class="abs" style="left:1165px;top:140px;width:2px;height:8px;background:#497700"></div>
<div class="abs" style="left:1165px;top:380px;width:2px;height:2px;background:#497700"></div>
<div class="abs" style="left:1165px;top:382px;width:2px;height:2px;background:#0083ac"></div>
<svg class="ic" style="left:0;top:0" width="1264" height="400" viewBox="0 0 1264 400" fill="none" stroke-width="1.3"><path stroke="#389edb" stroke-opacity="0.6" d="M1211.8 124.9h4.0M1201.8 128.9h5.0M1182.9 164.9h5.0M1190.9 260.9h4.0M1181.9 344.9h4.0M1181.9 348.9h4.0M1180.0 352.9h4.0"/><path stroke="#00ccaf" stroke-opacity="0.6" d="M1176.0 112.9h7.0M1190.9 112.9h4.0M1178.0 114.9h2.0M1178.0 118.9h7.0M1181.9 124.9h4.0M1177.0 128.9h7.0M1195.9 128.9h4.0M1181.9 132.9h2.0M1174.0 134.9h2.0M1175.0 136.9h7.0M1187.9 258.9h3.0M1184.9 368.9h2.0M1190.9 372.9h2.0"/><path stroke="#5b9b4c" stroke-opacity="0.2" d="M1197.9 108.9h1.0M1212.8 122.9h1.0M1225.7 122.9h1.0M1232.7 122.9h2.0M1178.0 130.9h1.0M1192.9 140.9h1.0M1181.9 150.9h1.0M1188.9 150.9h1.0M1202.8 150.9h1.0M1211.8 150.9h1.0M1178.0 292.9h1.0M1184.9 292.9h1.0M1198.9 292.9h1.0M1207.8 292.9h1.0M1178.0 308.9h1.0M1184.9 308.9h1.0M1198.9 308.9h1.0M1207.8 308.9h1.0M1178.0 332.9h1.0M1184.9 332.9h1.0M1198.9 332.9h1.0M1207.8 332.9h1.0M1189.9 362.9h1.0M1201.8 362.9h1.0M1178.0 364.9h1.0M1184.9 364.9h1.0M1198.9 364.9h1.0M1207.8 364.9h1.0M1194.9 378.9h1.0"/><path stroke="#5b9b4c" stroke-opacity="0.38" d="M1171.0 108.9h2.0M1181.0 108.9h1.0M1188.9 108.9h1.0M1171.0 122.9h2.0M1178.0 122.9h1.0M1183.9 122.9h1.0M1190.9 122.9h1.0M1194.9 122.9h1.0M1202.8 122.9h1.0M1207.8 122.9h1.0M1213.8 122.9h1.0M1218.8 122.9h1.0M1222.7 122.9h3.0M1171.0 126.9h2.0M1179.0 126.9h1.0M1182.9 126.9h1.0M1189.9 126.9h1.0M1194.9 126.9h1.0M1198.9 126.9h1.0M1206.8 126.9h1.0M1171.0 130.9h2.0M1177.0 130.9h1.0M1181.9 130.9h1.0M1171.0 140.9h2.0M1175.0 140.9h1.0M1185.9 140.9h1.0M1193.9 140.9h1.0M1200.8 140.9h1.0M1207.8 140.9h1.0M1214.8 140.9h1.0M1171.0 148.9h2.0M1178.0 148.9h1.0M1183.9 148.9h1.0M1195.9 148.9h1.0M1204.8 148.9h3.0M1217.8 148.9h1.0M1221.7 148.9h1.0M1171.0 150.9h2.0M1176.0 150.9h1.0M1182.9 150.9h2.0M1206.8 150.9h1.0M1209.8 150.9h1.0M1213.8 150.9h1.0M1219.8 150.9h1.0M1230.7 150.9h1.0M1240.7 150.9h1.0M1171.0 188.9h2.0M1183.9 188.9h1.0M1175.0 208.9h2.0M1171.0 290.9h2.0M1171.0 292.9h2.0M1179.0 292.9h2.0M1202.8 292.9h1.0M1205.8 292.9h1.0M1209.8 292.9h1.0M1213.8 292.9h1.0M1222.7 292.9h2.0M1171.0 306.9h2.0M1181.0 306.9h1.0M1171.0 308.9h2.0M1179.0 308.9h2.0M1202.8 308.9h1.0M1205.8 308.9h1.0M1209.8 308.9h1.0M1213.8 308.9h1.0M1222.7 308.9h2.0M1228.7 308.9h1.0M1237.7 308.9h1.0M1171.0 330.9h2.0M1171.0 332.9h2.0M1179.0 332.9h2.0M1202.8 332.9h1.0M1205.8 332.9h1.0M1209.8 332.9h1.0M1216.8 332.9h1.0M1221.7 332.9h1.0M1171.0 356.9h2.0M1179.0 356.9h1.0M1183.9 356.9h1.0M1208.8 358.9h2.0M1171.0 362.9h2.0M1179.0 362.9h1.0M1184.9 362.9h2.0M1190.9 362.9h1.0M1202.8 362.9h1.0M1209.8 362.9h1.0M1171.0 364.9h2.0M1179.0 364.9h2.0M1202.8 364.9h1.0M1205.8 364.9h1.0M1209.8 364.9h1.0M1215.8 364.9h1.0M1222.7 364.9h1.0M1228.7 364.9h1.0M1171.0 378.9h2.0M1181.0 378.9h1.0M1187.9 378.9h1.0"/><path stroke="#5b9b4c" stroke-opacity="0.6" d="M1173.0 108.9h8.0M1181.9 108.9h7.0M1189.9 108.9h8.0M1198.9 108.9h2.0M1173.0 122.9h5.0M1179.0 122.9h5.0M1184.9 122.9h6.0M1191.9 122.9h3.0M1195.9 122.9h7.0M1203.8 122.9h4.0M1208.8 122.9h4.0M1214.8 122.9h4.0M1219.8 122.9h3.0M1226.7 122.9h6.0M1173.0 126.9h6.0M1180.0 126.9h3.0M1183.9 126.9h6.0M1190.9 126.9h4.0M1195.9 126.9h3.0M1199.9 126.9h7.0M1207.8 126.9h7.0M1173.0 130.9h4.0M1179.0 130.9h3.0M1182.9 130.9h4.0M1173.0 140.9h2.0M1176.0 140.9h9.9M1186.9 140.9h6.0M1194.9 140.9h6.0M1201.8 140.9h6.0M1208.8 140.9h6.0M1215.8 140.9h7.0M1173.0 148.9h5.0M1179.0 148.9h5.0M1184.9 148.9h10.9M1196.9 148.9h8.0M1207.8 148.9h9.9M1218.8 148.9h3.0M1222.7 148.9h9.9M1173.0 150.9h3.0M1177.0 150.9h5.0M1184.9 150.9h4.0M1189.9 150.9h12.9M1203.8 150.9h3.0M1207.8 150.9h2.0M1210.8 150.9h1.0M1212.8 150.9h1.0M1214.8 150.9h5.0M1220.8 150.9h9.9M1231.7 150.9h9.0M1173.0 188.9h10.9M1184.9 188.9h9.9M1177.0 208.9h5.0M1173.0 290.9h8.0M1173.0 292.9h5.0M1181.0 292.9h4.0M1185.9 292.9h12.9M1199.9 292.9h3.0M1203.8 292.9h2.0M1206.8 292.9h1.0M1208.8 292.9h1.0M1210.8 292.9h3.0M1214.8 292.9h8.0M1224.7 292.9h9.0M1173.0 306.9h8.0M1181.9 306.9h9.9M1173.0 308.9h5.0M1181.0 308.9h4.0M1185.9 308.9h12.9M1199.9 308.9h3.0M1203.8 308.9h2.0M1206.8 308.9h1.0M1208.8 308.9h1.0M1210.8 308.9h3.0M1214.8 308.9h8.0M1224.7 308.9h4.0M1229.7 308.9h8.0M1238.7 308.9h8.3M1173.0 330.9h19.9M1173.0 332.9h5.0M1181.0 332.9h4.0M1185.9 332.9h12.9M1199.9 332.9h3.0M1203.8 332.9h2.0M1206.8 332.9h1.0M1208.8 332.9h1.0M1210.8 332.9h6.0M1217.8 332.9h4.0M1173.0 356.9h6.0M1180.0 356.9h4.0M1184.9 356.9h5.0M1210.8 358.9h3.0M1173.0 362.9h6.0M1180.0 362.9h5.0M1186.9 362.9h3.0M1191.9 362.9h9.9M1203.8 362.9h6.0M1173.0 364.9h5.0M1181.0 364.9h4.0M1185.9 364.9h12.9M1199.9 364.9h3.0M1203.8 364.9h2.0M1206.8 364.9h1.0M1208.8 364.9h1.0M1210.8 364.9h5.0M1216.8 364.9h6.0M1223.7 364.9h5.0M1173.0 378.9h8.0M1181.9 378.9h6.0M1188.9 378.9h6.0"/><path stroke="#00c4ff" stroke-opacity="0.38" d="M1175.0 124.9h1.0M1198.9 132.9h1.0M1177.0 154.9h1.0M1181.0 166.9h1.0M1184.9 166.9h1.0M1181.0 168.9h1.0M1185.9 168.9h1.0M1181.0 170.9h1.0M1185.9 170.9h1.0M1181.0 172.9h1.0M1185.9 172.9h1.0M1193.9 172.9h1.0M1181.0 174.9h1.0M1189.9 174.9h1.0M1181.9 176.9h1.0M1188.9 176.9h1.0M1179.0 178.9h1.0M1185.9 178.9h1.0M1178.0 182.9h1.0M1180.0 192.9h1.0M1175.0 248.9h1.0M1195.9 258.9h1.0M1175.0 284.9h1.0M1238.7 298.9h1.0M1175.0 312.9h1.0M1183.9 312.9h1.0M1179.0 336.9h1.0M1175.0 340.9h1.0M1174.0 344.9h1.0M1174.0 348.9h1.0M1174.0 352.9h1.0M1175.0 358.9h1.0M1180.0 358.9h1.0M1177.0 368.9h1.0M1201.8 368.9h1.0M1177.0 370.9h1.0M1181.9 372.9h1.0M1207.8 372.9h1.0M1181.9 374.9h1.0"/><path stroke="#00c4ff" stroke-opacity="0.6" d="M1171.0 124.9h4.0M1176.0 124.9h3.0M1188.9 128.9h5.0M1194.9 132.9h4.0M1199.9 132.9h3.0M1171.0 154.9h6.0M1178.0 154.9h3.0M1171.0 158.9h5.0M1175.0 164.9h5.0M1175.0 166.9h6.0M1181.9 166.9h3.0M1185.9 166.9h8.0M1175.0 168.9h6.0M1181.9 168.9h4.0M1186.9 168.9h7.0M1175.0 170.9h6.0M1181.9 170.9h4.0M1186.9 170.9h7.0M1175.0 172.9h6.0M1181.9 172.9h4.0M1186.9 172.9h7.0M1194.9 172.9h9.9M1175.0 174.9h6.0M1181.9 174.9h8.0M1190.9 174.9h6.0M1175.0 176.9h7.0M1182.9 176.9h6.0M1189.9 176.9h6.0M1175.0 178.9h4.0M1180.0 178.9h6.0M1186.9 178.9h6.0M1171.0 182.9h7.0M1179.0 182.9h5.0M1171.0 192.9h9.0M1181.0 192.9h4.0M1171.0 226.9h9.9M1171.0 248.9h4.0M1176.0 248.9h7.0M1171.0 252.9h9.0M1191.9 258.9h4.0M1196.9 258.9h3.0M1171.0 284.9h4.0M1176.0 284.9h10.9M1171.0 296.9h9.0M1234.7 298.9h4.0M1239.7 298.9h3.0M1171.0 312.9h4.0M1176.0 312.9h8.0M1184.9 312.9h9.9M1171.0 336.9h8.0M1180.0 336.9h4.0M1171.0 340.9h4.0M1176.0 340.9h4.0M1171.0 344.9h3.0M1175.0 344.9h4.0M1171.0 348.9h3.0M1175.0 348.9h4.0M1171.0 352.9h3.0M1175.0 352.9h2.0M1171.0 358.9h4.0M1176.0 358.9h4.0M1181.0 358.9h5.0M1171.0 368.9h6.0M1178.0 368.9h4.0M1197.9 368.9h4.0M1202.8 368.9h3.0M1171.0 370.9h6.0M1178.0 370.9h3.0M1171.0 372.9h10.9M1182.9 372.9h4.0M1203.8 372.9h4.0M1208.8 372.9h3.0M1171.0 374.9h10.9M1182.9 374.9h7.0"/><path stroke="#d082c4" stroke-opacity="0.6" d="M1171.0 112.9h4.0M1183.9 112.9h6.0M1171.0 114.9h6.0M1171.0 118.9h6.0M1171.0 134.9h2.0M1171.0 142.9h2.0M1175.0 144.9h6.0M1171.0 162.9h2.0M1171.0 380.9h2.0"/><path stroke="#d98e73" stroke-opacity="0.2" d="M1204.8 132.9h2.0M1209.8 132.9h1.0M1178.0 142.9h1.0M1184.9 142.9h1.0M1188.9 142.9h1.0M1193.9 142.9h1.0M1187.9 154.9h1.0M1198.9 154.9h1.0M1182.9 158.9h1.0M1188.9 158.9h1.0M1178.0 162.9h1.0M1184.9 162.9h1.0M1188.9 162.9h1.0M1193.9 162.9h1.0M1200.8 166.9h1.0M1220.8 166.9h1.0M1200.8 168.9h1.0M1220.8 168.9h1.0M1200.8 170.9h1.0M1220.8 170.9h1.0M1211.8 172.9h1.0M1242.6 172.9h1.0M1203.8 174.9h1.0M1226.7 174.9h1.0M1202.8 176.9h1.0M1224.7 176.9h1.0M1199.9 178.9h1.0M1218.8 178.9h1.0M1187.9 182.9h1.0M1197.9 182.9h1.0M1200.8 182.9h1.0M1221.7 182.9h1.0M1231.7 182.9h1.0M1235.7 182.9h1.0M1238.7 182.9h1.0M1242.6 182.9h1.0M1244.6 182.9h1.0M1246.6 182.9h0.4M1175.0 194.9h1.0M1181.9 194.9h1.0M1189.9 194.9h1.0M1195.9 194.9h1.0M1175.0 196.9h1.0M1181.9 196.9h1.0M1189.9 196.9h1.0M1194.9 196.9h1.0M1175.0 198.9h1.0M1181.9 198.9h1.0M1189.9 198.9h1.0M1202.8 198.9h1.0M1175.0 200.9h1.0M1181.9 200.9h1.0M1189.9 200.9h1.0M1198.9 200.9h1.0M1175.0 202.9h1.0M1181.9 202.9h1.0M1189.9 202.9h1.0M1198.9 202.9h1.0M1175.0 204.9h1.0M1181.9 204.9h1.0M1189.9 204.9h1.0M1201.8 204.9h1.0M1175.0 206.9h1.0M1181.9 206.9h1.0M1189.9 206.9h1.0M1198.9 206.9h1.0M1175.0 210.9h1.0M1181.0 210.9h1.0M1185.9 210.9h1.0M1197.9 210.9h1.0M1175.0 212.9h1.0M1181.0 212.9h1.0M1185.9 212.9h1.0M1197.9 212.9h1.0M1175.0 214.9h1.0M1183.9 214.9h1.0M1188.9 214.9h1.0M1203.8 214.9h1.0M1175.0 216.9h1.0M1182.9 216.9h1.0M1187.9 216.9h1.0M1201.8 216.9h1.0M1175.0 218.9h1.0M1181.9 218.9h1.0M1186.9 218.9h1.0M1199.9 218.9h1.0M1175.0 220.9h1.0M1185.9 220.9h1.0M1190.9 220.9h1.0M1207.8 220.9h1.0M1175.0 228.9h1.0M1181.9 228.9h1.0M1192.9 228.9h1.0M1201.8 228.9h1.0M1220.8 228.9h1.0M1175.0 230.9h1.0M1185.9 230.9h1.0M1196.9 230.9h1.0M1217.8 230.9h1.0M1175.0 232.9h1.0M1181.9 232.9h1.0M1189.9 232.9h1.0M1198.9 232.9h1.0M1209.8 232.9h1.0M1227.7 232.9h1.0M1175.0 234.9h1.0M1181.9 234.9h1.0M1192.9 234.9h1.0M1199.9 234.9h1.0M1216.8 234.9h1.0M1175.0 236.9h1.0M1181.9 236.9h1.0M1192.9 236.9h1.0M1197.9 236.9h1.0M1216.8 236.9h1.0M1175.0 238.9h1.0M1181.9 238.9h1.0M1189.9 238.9h1.0M1194.9 238.9h1.0M1205.8 238.9h1.0M1230.7 238.9h1.0M1175.0 240.9h1.0M1181.9 240.9h1.0M1189.9 240.9h1.0M1198.9 240.9h1.0M1209.8 240.9h1.0M1227.7 240.9h1.0M1175.0 242.9h1.0M1181.9 242.9h1.0M1192.9 242.9h1.0M1205.8 242.9h1.0M1229.7 242.9h1.0M1185.9 248.9h1.0M1202.8 248.9h1.0M1207.8 248.9h1.0M1179.0 256.9h1.0M1186.9 256.9h1.0M1189.9 256.9h1.0M1196.9 256.9h1.0M1205.8 256.9h1.0M1214.8 256.9h1.0M1221.7 256.9h1.0M1237.7 256.9h1.0M1179.0 258.9h1.0M1183.9 258.9h1.0M1209.8 258.9h1.0M1219.8 258.9h1.0M1179.0 260.9h1.0M1187.9 260.9h1.0M1179.0 262.9h1.0M1186.9 262.9h1.0M1182.9 264.9h1.0M1201.8 264.9h1.0M1186.9 266.9h1.0M1193.9 266.9h1.0M1202.8 266.9h1.0M1221.7 266.9h1.0M1227.7 266.9h1.0M1186.9 268.9h1.0M1193.9 268.9h1.0M1202.8 268.9h1.0M1221.7 268.9h1.0M1229.7 268.9h1.0M1186.9 270.9h1.0M1193.9 270.9h1.0M1201.8 270.9h1.0M1206.8 270.9h1.0M1225.7 270.9h1.0M1230.7 270.9h1.0M1186.9 272.9h1.0M1193.9 272.9h1.0M1201.8 272.9h1.0M1210.8 272.9h1.0M1229.7 272.9h1.0M1238.7 272.9h1.0M1189.9 284.9h1.0M1206.8 284.9h1.0M1211.8 284.9h1.0M1223.7 284.9h1.0M1175.0 298.9h1.0M1182.9 298.9h1.0M1186.9 298.9h1.0M1193.9 298.9h1.0M1196.9 298.9h1.0M1203.8 298.9h1.0M1206.8 298.9h1.0M1215.8 298.9h1.0M1223.7 298.9h1.0M1226.7 298.9h1.0M1231.7 298.9h1.0M1245.6 298.9h1.0M1179.0 316.9h1.0M1183.9 316.9h1.0M1186.9 316.9h1.0M1193.9 316.9h1.0M1201.8 316.9h1.0M1206.8 316.9h1.0M1226.7 316.9h1.0M1176.0 320.9h1.0M1181.0 320.9h1.0M1183.9 320.9h1.0M1190.9 320.9h1.0M1198.9 320.9h1.0M1203.8 320.9h1.0M1223.7 320.9h1.0M1246.6 320.9h0.4M1176.0 322.9h1.0M1181.0 322.9h1.0M1183.9 322.9h1.0M1190.9 322.9h1.0M1198.9 322.9h1.0M1203.8 322.9h1.0M1223.7 322.9h1.0M1176.0 324.9h1.0M1181.0 324.9h1.0M1183.9 324.9h1.0M1190.9 324.9h1.0M1198.9 324.9h1.0M1203.8 324.9h1.0M1223.7 324.9h1.0M1186.9 336.9h1.0M1192.9 336.9h1.0M1182.9 340.9h1.0M1186.9 340.9h1.0M1188.9 358.9h1.0M1194.9 358.9h1.0M1205.8 358.9h1.0M1207.8 368.9h1.0M1219.8 368.9h1.0M1183.9 370.9h1.0M1192.9 370.9h1.0M1213.8 372.9h1.0M1220.8 372.9h1.0M1192.9 374.9h1.0M1203.8 374.9h1.0M1211.8 374.9h1.0M1178.0 380.9h1.0M1184.9 380.9h1.0M1188.9 380.9h1.0M1193.9 380.9h1.0"/><path stroke="#d98e73" stroke-opacity="0.38" d="M1194.9 154.9h1.0M1207.8 166.9h1.0M1211.8 166.9h1.0M1207.8 168.9h1.0M1212.8 168.9h1.0M1207.8 170.9h1.0M1212.8 170.9h1.0M1218.8 172.9h1.0M1223.7 172.9h1.0M1231.7 172.9h1.0M1210.8 174.9h1.0M1219.8 174.9h1.0M1210.8 176.9h1.0M1217.8 176.9h1.0M1204.8 178.9h1.0M1211.8 178.9h1.0M1208.8 182.9h1.0M1217.8 182.9h1.0M1194.9 248.9h1.0M1182.9 260.9h1.0M1190.9 264.9h1.0M1210.8 266.9h1.0M1210.8 268.9h1.0M1214.8 270.9h1.0M1218.8 272.9h1.0M1198.9 284.9h1.0M1215.8 316.9h1.0M1212.8 320.9h1.0M1212.8 322.9h1.0M1212.8 324.9h1.0M1189.9 336.9h1.0M1184.9 370.9h1.0M1191.9 370.9h1.0"/><path stroke="#d98e73" stroke-opacity="0.6" d="M1206.8 132.9h3.0M1179.0 142.9h6.0M1189.9 142.9h4.0M1188.9 154.9h6.0M1195.9 154.9h3.0M1183.9 158.9h5.0M1179.0 162.9h6.0M1189.9 162.9h4.0M1201.8 166.9h6.0M1208.8 166.9h3.0M1212.8 166.9h8.0M1201.8 168.9h6.0M1208.8 168.9h4.0M1213.8 168.9h7.0M1201.8 170.9h6.0M1208.8 170.9h4.0M1213.8 170.9h7.0M1212.8 172.9h6.0M1219.8 172.9h4.0M1224.7 172.9h7.0M1232.7 172.9h9.9M1204.8 174.9h6.0M1211.8 174.9h8.0M1220.8 174.9h6.0M1203.8 176.9h7.0M1211.8 176.9h6.0M1218.8 176.9h6.0M1200.8 178.9h4.0M1205.8 178.9h6.0M1212.8 178.9h6.0M1188.9 182.9h9.0M1201.8 182.9h7.0M1209.8 182.9h8.0M1218.8 182.9h3.0M1222.7 182.9h9.0M1232.7 182.9h3.0M1239.7 182.9h3.0M1243.6 182.9h1.0M1245.6 182.9h1.0M1176.0 194.9h6.0M1182.9 194.9h7.0M1190.9 194.9h5.0M1176.0 196.9h6.0M1182.9 196.9h7.0M1190.9 196.9h4.0M1176.0 198.9h6.0M1182.9 198.9h7.0M1190.9 198.9h11.9M1176.0 200.9h6.0M1182.9 200.9h7.0M1190.9 200.9h8.0M1176.0 202.9h6.0M1182.9 202.9h7.0M1190.9 202.9h8.0M1176.0 204.9h6.0M1182.9 204.9h7.0M1190.9 204.9h10.9M1176.0 206.9h6.0M1182.9 206.9h7.0M1190.9 206.9h8.0M1176.0 210.9h5.0M1181.9 210.9h4.0M1186.9 210.9h10.9M1176.0 212.9h5.0M1181.9 212.9h4.0M1186.9 212.9h10.9M1176.0 214.9h8.0M1184.9 214.9h4.0M1189.9 214.9h13.9M1176.0 216.9h7.0M1183.9 216.9h4.0M1188.9 216.9h12.9M1176.0 218.9h6.0M1182.9 218.9h4.0M1187.9 218.9h11.9M1176.0 220.9h9.9M1186.9 220.9h4.0M1191.9 220.9h15.9M1176.0 228.9h6.0M1182.9 228.9h9.9M1193.9 228.9h8.0M1202.8 228.9h17.9M1176.0 230.9h9.9M1186.9 230.9h9.9M1197.9 230.9h19.9M1176.0 232.9h6.0M1182.9 232.9h7.0M1190.9 232.9h8.0M1199.9 232.9h9.9M1210.8 232.9h16.9M1176.0 234.9h6.0M1182.9 234.9h9.9M1193.9 234.9h6.0M1200.8 234.9h15.9M1176.0 236.9h6.0M1182.9 236.9h9.9M1193.9 236.9h4.0M1198.9 236.9h17.9M1176.0 238.9h6.0M1182.9 238.9h7.0M1190.9 238.9h4.0M1195.9 238.9h9.9M1206.8 238.9h23.9M1176.0 240.9h6.0M1182.9 240.9h7.0M1190.9 240.9h8.0M1199.9 240.9h9.9M1210.8 240.9h16.9M1176.0 242.9h6.0M1182.9 242.9h9.9M1193.9 242.9h11.9M1206.8 242.9h22.9M1186.9 248.9h8.0M1195.9 248.9h7.0M1203.8 248.9h4.0M1180.0 256.9h7.0M1190.9 256.9h6.0M1197.9 256.9h8.0M1206.8 256.9h8.0M1215.8 256.9h6.0M1222.7 256.9h14.9M1180.0 258.9h4.0M1210.8 258.9h9.0M1180.0 260.9h3.0M1183.9 260.9h4.0M1180.0 262.9h7.0M1183.9 264.9h7.0M1191.9 264.9h9.9M1187.9 266.9h6.0M1194.9 266.9h8.0M1203.8 266.9h7.0M1211.8 266.9h9.9M1222.7 266.9h5.0M1187.9 268.9h6.0M1194.9 268.9h8.0M1203.8 268.9h7.0M1211.8 268.9h9.9M1222.7 268.9h7.0M1187.9 270.9h6.0M1194.9 270.9h7.0M1202.8 270.9h4.0M1207.8 270.9h7.0M1215.8 270.9h9.9M1226.7 270.9h4.0M1187.9 272.9h6.0M1194.9 272.9h7.0M1202.8 272.9h8.0M1211.8 272.9h7.0M1219.8 272.9h9.9M1230.7 272.9h8.0M1190.9 284.9h8.0M1199.9 284.9h7.0M1207.8 284.9h4.0M1212.8 284.9h10.9M1176.0 298.9h7.0M1187.9 298.9h6.0M1197.9 298.9h6.0M1204.8 298.9h2.0M1207.8 298.9h8.0M1216.8 298.9h7.0M1227.7 298.9h4.0M1246.6 298.9h0.4M1180.0 316.9h4.0M1187.9 316.9h6.0M1194.9 316.9h7.0M1202.8 316.9h4.0M1207.8 316.9h8.0M1216.8 316.9h9.9M1227.7 316.9h19.3M1177.0 320.9h4.0M1184.9 320.9h6.0M1191.9 320.9h7.0M1199.9 320.9h4.0M1204.8 320.9h8.0M1213.8 320.9h9.9M1224.7 320.9h21.9M1177.0 322.9h4.0M1184.9 322.9h6.0M1191.9 322.9h7.0M1199.9 322.9h4.0M1204.8 322.9h8.0M1213.8 322.9h9.9M1224.7 322.9h22.3M1177.0 324.9h4.0M1184.9 324.9h6.0M1191.9 324.9h7.0M1199.9 324.9h4.0M1204.8 324.9h8.0M1213.8 324.9h9.9M1224.7 324.9h22.3M1187.9 336.9h2.0M1190.9 336.9h2.0M1183.9 340.9h3.0M1189.9 358.9h5.0M1195.9 358.9h9.9M1208.8 368.9h10.9M1185.9 370.9h6.0M1214.8 372.9h6.0M1193.9 374.9h9.9M1204.8 374.9h7.0M1212.8 374.9h34.2M1179.0 380.9h6.0M1189.9 380.9h4.0"/><path stroke="#d4d4d4" stroke-opacity="0.2" d="M1195.9 124.9h1.0M1216.8 124.9h1.0M1223.7 124.9h1.0M1183.9 128.9h1.0M1199.9 128.9h1.0M1183.9 132.9h1.0M1188.9 132.9h1.0M1202.8 132.9h1.0M1176.0 134.9h1.0M1181.0 134.9h1.0M1197.9 134.9h1.0M1181.9 136.9h1.0M1185.9 136.9h1.0M1194.9 142.9h1.0M1194.9 162.9h1.0M1198.9 182.9h1.0M1236.7 182.9h1.0M1196.9 194.9h1.0M1195.9 196.9h1.0M1203.8 198.9h1.0M1199.9 200.9h1.0M1199.9 202.9h1.0M1202.8 204.9h1.0M1199.9 206.9h1.0M1198.9 210.9h1.0M1198.9 212.9h1.0M1204.8 214.9h1.0M1202.8 216.9h1.0M1200.8 218.9h1.0M1208.8 220.9h1.0M1221.7 228.9h1.0M1218.8 230.9h1.0M1228.7 232.9h1.0M1217.8 234.9h1.0M1217.8 236.9h1.0M1231.7 238.9h1.0M1228.7 240.9h1.0M1230.7 242.9h1.0M1187.9 256.9h1.0M1238.7 256.9h1.0M1184.9 258.9h1.0M1199.9 258.9h1.0M1223.7 258.9h1.0M1188.9 260.9h1.0M1194.9 260.9h1.0M1187.9 262.9h1.0M1202.8 264.9h1.0M1228.7 266.9h1.0M1230.7 268.9h1.0M1231.7 270.9h1.0M1239.7 272.9h1.0M1183.9 274.9h1.0M1180.0 276.9h1.0M1176.0 278.9h1.0M1183.9 298.9h1.0M1194.9 298.9h1.0M1224.7 298.9h1.0M1232.7 298.9h1.0M1184.9 316.9h1.0M1176.0 318.9h1.0M1181.9 320.9h1.0M1181.9 322.9h1.0M1181.9 324.9h1.0M1186.9 368.9h1.0M1191.9 368.9h1.0M1205.8 368.9h1.0M1192.9 372.9h1.0M1197.9 372.9h1.0M1211.8 372.9h1.0M1194.9 380.9h1.0M1187.9 382.9h1.0"/><path stroke="#d4d4d4" stroke-opacity="0.38" d="M1180.0 124.9h1.0M1185.9 124.9h1.0M1194.9 124.9h1.0M1203.8 124.9h1.0M1210.8 124.9h1.0M1215.8 124.9h1.0M1175.0 128.9h1.0M1187.9 128.9h1.0M1193.9 128.9h1.0M1194.9 128.9h1.0M1206.8 128.9h1.0M1207.8 128.9h1.0M1180.0 132.9h1.0M1193.9 132.9h1.0M1210.8 132.9h1.0M1187.9 134.9h1.0M1196.9 134.9h1.0M1194.9 136.9h1.0M1203.8 136.9h1.0M1177.0 142.9h1.0M1185.9 142.9h1.0M1186.9 142.9h1.0M1187.9 142.9h1.0M1181.9 154.9h1.0M1186.9 154.9h1.0M1199.9 154.9h1.0M1177.0 158.9h1.0M1181.9 158.9h1.0M1189.9 158.9h1.0M1177.0 162.9h1.0M1185.9 162.9h1.0M1186.9 162.9h1.0M1187.9 162.9h1.0M1181.0 164.9h1.0M1194.9 166.9h1.0M1199.9 166.9h1.0M1221.7 166.9h1.0M1194.9 168.9h1.0M1199.9 168.9h1.0M1221.7 168.9h1.0M1194.9 170.9h1.0M1199.9 170.9h1.0M1221.7 170.9h1.0M1205.8 172.9h1.0M1210.8 172.9h1.0M1243.6 172.9h1.0M1197.9 174.9h1.0M1202.8 174.9h1.0M1227.7 174.9h1.0M1196.9 176.9h1.0M1201.8 176.9h1.0M1225.7 176.9h1.0M1193.9 178.9h1.0M1198.9 178.9h1.0M1219.8 178.9h1.0M1184.9 182.9h1.0M1186.9 182.9h1.0M1185.9 192.9h1.0M1187.9 192.9h1.0M1171.0 222.9h1.0M1181.9 226.9h1.0M1183.9 226.9h1.0M1171.0 244.9h1.0M1183.9 248.9h1.0M1181.0 252.9h1.0M1182.9 252.9h1.0M1175.0 254.9h1.0M1186.9 258.9h1.0M1190.9 258.9h1.0M1208.8 258.9h1.0M1220.8 258.9h1.0M1221.7 258.9h1.0M1222.7 258.9h1.0M1189.9 262.9h1.0M1204.8 264.9h1.0M1182.9 274.9h1.0M1179.0 276.9h1.0M1175.0 278.9h1.0M1171.0 280.9h1.0M1187.9 284.9h1.0M1181.0 296.9h1.0M1182.9 296.9h1.0M1185.9 298.9h1.0M1243.6 298.9h1.0M1171.0 300.9h1.0M1195.9 312.9h1.0M1197.9 312.9h1.0M1175.0 314.9h1.0M1175.0 318.9h1.0M1175.0 320.9h1.0M1175.0 322.9h1.0M1175.0 324.9h1.0M1171.0 326.9h1.0M1184.9 336.9h1.0M1181.0 340.9h1.0M1180.0 344.9h1.0M1180.0 348.9h1.0M1178.0 352.9h1.0M1186.9 358.9h1.0M1182.9 368.9h1.0M1196.9 368.9h1.0M1220.8 368.9h1.0M1181.9 370.9h1.0M1187.9 372.9h1.0M1189.9 372.9h1.0M1202.8 372.9h1.0M1221.7 372.9h1.0M1222.7 372.9h1.0M1190.9 374.9h1.0M1177.0 380.9h1.0M1185.9 380.9h1.0M1186.9 380.9h1.0M1187.9 380.9h1.0M1196.9 382.9h1.0M1203.8 382.9h1.0M1204.8 382.9h1.0M1205.8 382.9h1.0"/><path stroke="#d4d4d4" stroke-opacity="0.6" d="M1184.9 128.9h1.0M1185.9 128.9h1.0M1186.9 128.9h1.0M1182.9 136.9h1.0M1183.9 136.9h1.0M1184.9 136.9h1.0"/><path stroke="#88deff" stroke-opacity="0.38" d="M1186.9 124.9h2.0M1192.9 124.9h2.0M1174.0 132.9h1.0M1191.9 134.9h1.0M1190.9 136.9h1.0M1198.9 136.9h1.0M1187.9 144.9h1.0M1181.0 382.9h1.0"/><path stroke="#88deff" stroke-opacity="0.6" d="M1188.9 124.9h4.0M1196.9 124.9h7.0M1204.8 124.9h6.0M1217.8 124.9h6.0M1224.7 124.9h6.0M1171.0 128.9h3.0M1171.0 132.9h3.0M1175.0 132.9h4.0M1184.9 132.9h4.0M1189.9 132.9h4.0M1177.0 134.9h4.0M1181.9 134.9h6.0M1188.9 134.9h3.0M1192.9 134.9h4.0M1186.9 136.9h4.0M1191.9 136.9h3.0M1195.9 136.9h3.0M1199.9 136.9h4.0M1174.0 142.9h3.0M1181.9 144.9h6.0M1188.9 144.9h6.0M1183.9 154.9h3.0M1179.0 158.9h3.0M1174.0 162.9h3.0M1196.9 166.9h3.0M1196.9 168.9h3.0M1196.9 170.9h3.0M1207.8 172.9h3.0M1199.9 174.9h3.0M1198.9 176.9h3.0M1195.9 178.9h3.0M1200.8 258.9h8.0M1187.9 368.9h4.0M1192.9 368.9h4.0M1193.9 372.9h4.0M1198.9 372.9h4.0M1174.0 380.9h3.0M1175.0 382.9h6.0M1181.9 382.9h6.0M1188.9 382.9h8.0M1197.9 382.9h6.0"/></svg>
<div class="abs" style="left:1178px;top:117.6px;width:7px;height:2.5px;background:#e0b400"></div>
<div class="abs" style="left:1182px;top:143.6px;width:13px;height:2.5px;background:#e0b400"></div>
<!-- scrollbar -->
<div class="abs" style="left:1248px;top:108px;width:16px;height:104px;background:#454545;border-left:1px solid #555"></div>
<div class="abs" style="left:1249px;top:126px;width:6px;height:8px;background:#733c3c"></div>
<div class="abs" style="left:1262px;top:126px;width:2px;height:8px;background:#b89a1a"></div>
<div class="abs" style="left:1249px;top:142px;width:6px;height:8px;background:#31687f"></div>
<div class="abs" style="left:1249px;top:150px;width:6px;height:8px;background:#55662f"></div>
<div class="abs" style="left:1248px;top:167px;width:16px;height:2px;background:#9a9a9a"></div>
<div class="abs" style="left:1249px;top:172px;width:6px;height:17px;background:#55662f"></div>
<div class="abs" style="left:1262px;top:178px;width:2px;height:8px;background:#b89a1a"></div>
<div class="abs" style="left:1249px;top:658px;width:6px;height:4px;background:#4a5a1c"></div>
<div class="abs" style="left:1249px;top:662px;width:6px;height:4px;background:#467832"></div>
<div class="abs" style="left:1249px;top:666px;width:6px;height:4px;background:#145a78"></div>
<div class="abs" style="left:1248px;top:212px;width:1px;height:561px;background:#343434"></div>
<!-- horizontal scrollbar -->
<div class="abs" style="left:407px;top:755px;width:742px;height:17px;background:rgba(121,121,121,.35)"></div>
<!-- status bar -->
<div id="status" class="abs"></div>
<svg class="ic" style="left:19.39px;top:778.90px" width="20" height="20" viewBox="0 0 16 16"><path fill="#ffffff" d="M14.03 5.49Q14.03 4.8 13.65 4.19Q13.28 3.57 12.64 3.25Q12 2.93 11.31 2.99Q10.61 3.04 10.03 3.47Q9.44 3.89 9.2 4.56Q8.96 5.23 9.07 5.92Q9.17 6.61 9.65 7.12Q10.13 7.63 10.83 7.84Q10.56 8.37 10.08 8.67Q9.6 8.96 9.01 8.96H7.04Q5.87 8.96 5.01 9.76V4.91Q5.97 4.75 6.53 3.97Q7.09 3.2 7.01 2.24Q6.93 1.28 6.21 0.64Q5.49 0 4.53 0Q3.57 0 2.85 0.64Q2.13 1.28 2.05 2.24Q1.97 3.2 2.53 3.97Q3.09 4.75 4.05 4.91V10.99Q3.09 11.2 2.51 11.95Q1.92 12.69 2 13.65Q2.08 14.61 2.75 15.28Q3.41 15.95 4.37 16Q5.33 16.05 6.08 15.47Q6.83 14.88 6.99 13.92Q7.15 12.96 6.67 12.16Q6.19 11.36 5.23 11.09Q5.49 10.56 5.97 10.27Q6.45 9.97 7.04 9.97H9.01Q9.97 9.97 10.75 9.41Q11.52 8.85 11.84 7.95Q12.75 7.84 13.39 7.12Q14.03 6.4 14.03 5.49ZM3.04 2.51Q3.04 1.87 3.47 1.44Q3.89 1.01 4.53 1.01Q5.17 1.01 5.6 1.44Q6.03 1.87 6.03 2.48Q6.03 3.09 5.6 3.55Q5.17 4 4.53 4Q3.89 4 3.47 3.55Q3.04 3.09 3.04 2.51ZM6.03 13.44Q6.03 14.08 5.6 14.51Q5.17 14.93 4.53 14.93Q3.89 14.93 3.47 14.51Q3.04 14.08 3.04 13.47Q3.04 12.85 3.47 12.4Q3.89 11.95 4.53 11.95Q5.17 11.95 5.6 12.4Q6.03 12.85 6.03 13.44ZM11.52 6.99Q10.88 6.99 10.45 6.53Q10.03 6.08 10.03 5.47Q10.03 4.85 10.45 4.43Q10.88 4 11.49 4Q12.11 4 12.56 4.43Q13.01 4.85 13.01 5.47Q13.01 6.08 12.56 6.53Q12.11 6.99 11.52 6.99Z"/></svg>
<div id="s1" class="t " style="left:44.44px;top:781.00px;font-size:17.28px;letter-spacing:-0.110px;color:#fff;">main*</div>
<svg class="ic" style="left:111.96px;top:778.79px" width="20" height="20" viewBox="0 0 16 16"><path fill="#ffffff" d="M11.95 5.97H12Q13.23 6.03 14.11 6.88Q14.99 7.73 14.99 8.99Q14.99 10.24 14.11 11.12Q13.23 12 12 12H10.03V10.99H12Q12.8 10.99 13.36 10.4Q13.92 9.81 13.92 9.01Q13.92 8.21 13.36 7.63Q12.8 7.04 12 6.99H11.09L10.99 6.13Q10.88 5.33 10.27 4.75Q9.65 4.16 8.83 4.03Q8 3.89 7.28 4.32Q6.56 4.75 6.24 5.49L5.92 6.24L5.07 6.08Q4.8 6.03 4.53 5.97Q3.47 6.03 2.77 6.72Q2.24 7.25 2.08 8Q1.92 8.75 2.21 9.44Q2.51 10.13 3.15 10.56Q3.79 10.99 4.53 10.99H7.04V12H4.53Q3.79 12 3.09 11.71Q2.4 11.41 1.92 10.83Q1.12 9.97 1.01 8.83Q0.91 7.68 1.49 6.72Q1.87 6.08 2.48 5.63Q3.09 5.17 3.84 5.04Q4.59 4.91 5.33 5.12Q5.81 4.05 6.83 3.47Q7.84 2.88 8.99 3.04Q10.13 3.2 10.96 4.03Q11.79 4.85 11.95 6.03ZM10.29 9.87 8.96 8.53V13.97H8V8.59L6.72 9.87L6.03 9.12L8.16 6.99H8.85L10.99 9.12Z"/></svg>
<div id="s2" class="t " style="left:154.59px;top:781.00px;font-size:17.28px;letter-spacing:0.298px;color:#fff;">Python 3.8.9 64-bit</div>
<svg class="ic" style="left:328.78px;top:779.15px" width="20.3" height="20.3" viewBox="0 0 16 16"><path fill="#ffffff" d="M8.59 1.01Q9.76 1.07 10.85 1.6Q11.95 2.13 12.8 2.99Q14.83 5.17 14.83 8.11Q14.83 10.4 13.23 12.48Q12.43 13.44 11.41 14.05Q10.4 14.67 9.23 14.88Q6.67 15.36 4.59 14.19Q3.52 13.6 2.72 12.69Q1.92 11.79 1.49 10.67Q1.07 9.55 0.99 8.32Q0.91 7.09 1.28 5.97Q2.08 3.52 4.11 2.19Q5.07 1.55 6.21 1.23Q7.36 0.91 8.59 1.01ZM9.12 13.92Q11.15 13.44 12.48 11.79Q13.81 9.97 13.71 8Q13.71 6.77 13.25 5.65Q12.8 4.53 12 3.68Q10.45 2.13 8.43 1.97Q7.41 1.92 6.4 2.16Q5.39 2.4 4.59 2.99Q2.88 4.27 2.27 6.35Q1.65 8.43 2.53 10.35Q3.41 12.27 5.23 13.28Q6.08 13.81 7.09 13.97Q8.11 14.13 9.12 13.92ZM7.89 7.52 10.29 5.01 10.99 5.71 8.59 8.21 10.99 10.72 10.29 11.41 7.89 8.91 5.49 11.41 4.8 10.72 7.2 8.21 4.8 5.71 5.49 5.01Z"/></svg>
<div id="s3" class="t " style="left:354.11px;top:781.00px;font-size:17.28px;letter-spacing:0.000px;color:#fff;">0</div>
<svg class="ic" style="left:368.50px;top:779.63px" width="20" height="20" viewBox="0 0 16 16"><path fill="#ffffff" d="M7.57 1.01H8.43L14.99 13.28L14.56 13.97H1.44L1.01 13.28ZM8 2.29 2.29 13.01H13.71ZM8.64 12V10.99H7.36V12ZM7.36 9.97V5.97H8.64V9.97Z"/></svg>
<div id="s4" class="t " style="left:393.38px;top:781.00px;font-size:17.28px;letter-spacing:0.000px;color:#fff;">2</div>
<div id="s5" class="t " style="left:778.81px;top:781.00px;font-size:17.28px;letter-spacing:-0.426px;color:#fff;">Ln 16, Col 1</div>
<div id="s6" class="t " style="left:889.98px;top:781.00px;font-size:17.28px;letter-spacing:-0.062px;color:#fff;">Spaces: 4</div>
<div id="s7" class="t " style="left:989.91px;top:781.00px;font-size:17.28px;letter-spacing:0.459px;color:#fff;">UTF-8</div>
<div id="s8" class="t " style="left:1062.59px;top:781.00px;font-size:17.28px;letter-spacing:-0.312px;color:#fff;">LF</div>
<div id="s9" class="t " style="left:1105.59px;top:781.00px;font-size:17.28px;letter-spacing:0.189px;color:#fff;">Python</div>
<svg class="ic" style="left:1184.13px;top:779.30px" width="20" height="20" viewBox="0 0 16 16"><path fill="#ffffff" d="M4.48 1.01 4 1.49V3.04L4.48 2.99L5.01 3.04V1.97H14.03V6.99H12.27L10.99 8.27V6.99H8.96L9.01 7.52L8.96 8H10.03V9.49L10.88 9.87L12.69 8H14.51L14.99 7.52V1.49L14.51 1.01ZM6.4 10.45Q7.15 9.97 7.57 9.2Q8 8.43 8 7.49Q8 6.56 7.52 5.76Q7.04 4.96 6.24 4.48Q5.44 4 4.51 4Q3.57 4 2.75 4.48Q1.92 4.96 1.47 5.76Q1.01 6.56 1.01 7.49Q1.01 8.43 1.44 9.2Q1.87 9.97 2.56 10.45Q1.87 10.77 1.28 11.36Q0.69 11.95 0.32 12.8Q0.11 13.39 0.05 14.03L0 14.99H1.01V14.45Q1.01 13.76 1.28 13.15Q1.55 12.53 2.03 12.03Q2.51 11.52 3.15 11.25Q3.79 10.99 4.48 10.99H4.53Q5.23 10.99 5.87 11.25Q6.51 11.52 6.99 12.03Q7.47 12.53 7.73 13.15Q8 13.76 8 14.45V14.99H9.01L8.96 13.97Q8.91 13.39 8.64 12.8Q8.32 11.95 7.73 11.36Q7.15 10.77 6.4 10.45ZM4.48 9.97Q3.47 9.97 2.75 9.25Q2.03 8.53 2.03 7.49Q2.03 6.45 2.75 5.73Q3.47 5.01 4.51 5.01Q5.55 5.01 6.27 5.73Q6.99 6.45 6.99 7.49Q6.99 8.53 6.27 9.25Q5.55 9.97 4.48 9.97Z"/></svg>
<svg class="ic" style="left:1226.10px;top:779.32px" width="20" height="20" viewBox="0 0 16 16"><path fill="#ffffff" d="M13.39 10.56Q13.01 9.44 13.01 8.21V6.19Q13.01 5.23 12.69 4.35Q12.37 3.47 11.73 2.75Q11.09 2.03 10.27 1.57Q9.44 1.12 8.48 1.01Q7.41 0.91 6.4 1.25Q5.39 1.6 4.61 2.32Q3.84 3.04 3.41 4Q2.99 4.96 2.99 6.03V8.21Q2.99 9.44 2.61 10.56L2.03 12.32L2.45 13.01H5.97Q5.97 13.81 6.56 14.4Q7.15 14.99 7.97 14.99Q8.8 14.99 9.39 14.4Q9.97 13.81 9.97 13.01H13.49L13.97 12.32ZM8.69 13.71Q8.37 14.03 7.97 14.03Q7.57 14.03 7.28 13.73Q6.99 13.44 6.99 13.01H8.96Q9.01 13.44 8.69 13.71ZM3.15 12 3.52 10.88Q4 9.6 4 8.21V6.03Q4 5.17 4.35 4.37Q4.69 3.57 5.31 3.01Q5.92 2.45 6.75 2.19Q7.57 1.92 8.37 2.03Q9.97 2.24 10.99 3.41Q11.47 4 11.73 4.72Q12 5.44 12 6.19V8.21Q12 9.6 12.43 10.93L12.8 12Z"/></svg>
</div>
</body></html>
